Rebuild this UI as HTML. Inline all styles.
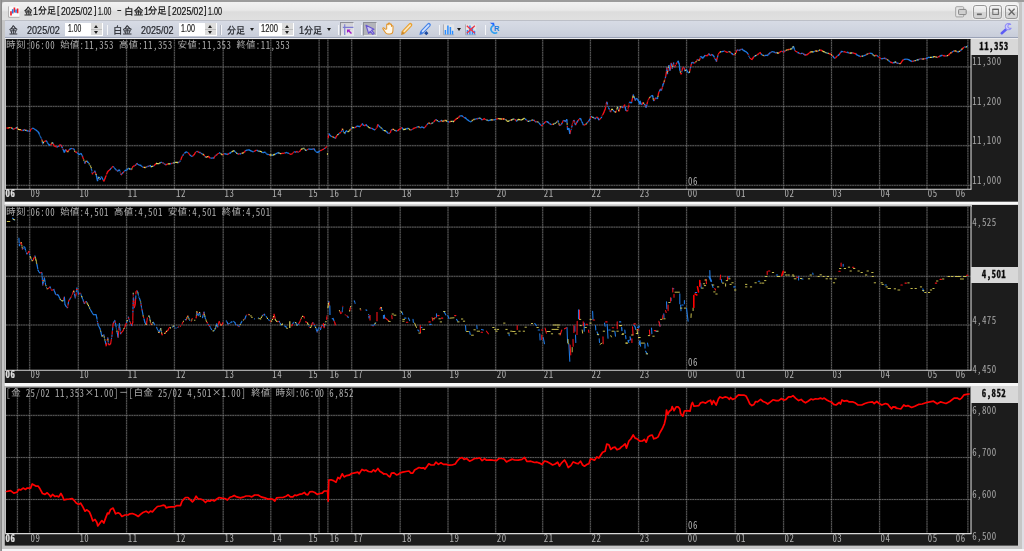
<!DOCTYPE html>
<html lang="ja"><head><meta charset="utf-8"><title>金1分足[2025/02]1.00 - 白金1分足[2025/02]1.00</title>
<style>html,body{margin:0;padding:0}
body{width:1024px;height:551px;overflow:hidden;position:relative;background:#f4f4f6;font-family:"Liberation Sans","IPAGothic","Noto Sans CJK JP",sans-serif;}
.win{position:absolute;left:0;top:0;width:1022px;height:549px;background:#c6c6c6;border-radius:3px 3px 0 0}
.edgeT{position:absolute;left:0;top:0;width:1024px;height:2px;background:#9c9c9c}
.edgeL{position:absolute;left:0;top:0;width:1px;height:551px;background:#9a9a9a;border-right:1px solid #8a8a8a}
.edgeR{position:absolute;left:1022px;top:2px;width:2px;height:549px;background:linear-gradient(90deg,#d0d0d4 0,#d0d0d4 20%,#dedee4 20%)}
.edgeB{position:absolute;left:1.7px;top:548.6px;width:1022.3px;height:2.4px;background:#f6f6f8}
.title{position:absolute;left:2px;top:2.2px;width:1016.6px;height:18.2px;background:linear-gradient(#f2f2f2,#e9e9e9 45%,#dcdcdc 55%,#e0e0e0);border-radius:3px 3px 0 0}
.ttext{position:absolute;left:24px;top:6.6px;font-size:10.1px;line-height:11px;color:#1a1a1a;white-space:nowrap;letter-spacing:-0.3px;text-shadow:0 0 2px #fff}
.tool{position:absolute;left:4.6px;top:20.3px;width:1013.6px;height:17.7px;background:linear-gradient(#d7dbe5,#cfd4df 60%,#c8cdda);border-top:0.6px solid #bcbfc7;box-sizing:border-box;border-bottom:1.2px solid #9aa2b6}
.toolw{position:absolute;left:4.6px;top:38.0px;width:1013.6px;height:1.4px;background:#ececee}
.tl{position:absolute;top:24.6px;font-size:9.9px;line-height:11px;color:#30323a;white-space:nowrap;letter-spacing:-0.35px}
.inp{position:absolute;top:22.5px;height:13.8px;background:#fff;box-sizing:border-box}
.inp span{position:absolute;left:2px;top:1.2px;font-size:9.6px;line-height:11px;color:#222;letter-spacing:-0.6px}
.spin{position:absolute;right:1.1px;top:0.9px;width:11px;height:12px;background:#dcdcdc}
.spin:before,.spin:after{content:"";position:absolute;left:3.2px;border-left:2.4px solid transparent;border-right:2.4px solid transparent}
.spin:before{top:1.6px;border-bottom:3px solid #222}
.spin:after{bottom:1.6px;border-top:3px solid #222}
.spin i{position:absolute;left:0;right:0;top:5.6px;height:0.8px;background:#bdbdbd}
.vsep{position:absolute;top:24.6px;width:1.5px;height:10.4px;background:linear-gradient(90deg,#b4b8c2 0,#b4b8c2 35%,#f4f5f8 45%)}
.dd{position:absolute;top:27.8px;width:0;height:0;border-left:2.5px solid transparent;border-right:2.5px solid transparent;border-top:3px solid #1c1c1c}
.btn{position:absolute;top:22px;height:13.8px;background:#b4b6be;border:0.6px solid #e4e6ea;border-top-color:#8e9098;border-left-color:#8e9098;box-sizing:border-box}
.ico{position:absolute}
.chart{position:absolute;left:0;top:0;width:1024px;height:551px}
.pane{position:absolute;left:4.8px;width:1013.2px;background:#1c1c1c}
.plot{position:absolute;left:6px;width:965px;background:#000}
.sep{position:absolute;left:4.8px;width:1013.2px;height:3.2px;background:linear-gradient(#f4f4f4,#fafafa 40%,#ececec)}
.ptop{position:absolute;left:4.8px;width:967.2px;background:#c6c6c6}
.cv{position:absolute;left:0;top:0}
.t{position:absolute;filter:grayscale(1);transform:scaleY(1.2);transform-origin:0 50%;font-family:"Noto Sans Mono CJK JP","IPAGothic","Liberation Mono",monospace;font-size:8.9px;letter-spacing:0.458px;line-height:11px;color:#c6c6c6;white-space:nowrap}
.xl{color:#b0b0b0}
.yl{left:972.2px;color:#a8a8a8}
.inf{left:6.1px;color:#acacac}
.pb{position:absolute;left:971.2px;width:46.8px;background:#d8d8d8}
.pb span{position:absolute;left:-1.2px;right:0;top:50%;margin-top:-6.5px;text-align:center;font-family:'Noto Sans Mono CJK JP','IPAGothic','Liberation Mono',monospace;font-size:8.9px;letter-spacing:0.458px;line-height:11px;font-weight:bold;color:#0a0a0a;filter:grayscale(1);transform:scaleY(1.2);-webkit-text-stroke:0.25px #0a0a0a}
.wb{position:absolute;top:4.55px;width:13.7px;height:14.1px;box-sizing:border-box;border:1px solid #969696;border-radius:2.8px;background:linear-gradient(#f3f3f3,#e6e6e6 48%,#d6d6d6 52%,#d2d2d2);box-shadow:0 0 0 0.7px rgba(255,255,255,.55)}

.wb svg{position:absolute;left:-0.8px;top:-0.85px}
.r{position:absolute;white-space:nowrap;transform-origin:0 50%;line-height:12px}
.b1{background:linear-gradient(#d2d2d6,#e6e6ea)}
.b2{background:#b3b4ba}
.it{transform-origin:0 50%}
.k{font-family:"IPAGothic","Noto Sans CJK JP",monospace;font-size:9.816px;letter-spacing:0;display:inline-block;transform:scaleY(0.833);transform-origin:0 62%}
.xb{font-weight:bold;color:#e2e2e2;-webkit-text-stroke:0.2px #e2e2e2}
</style></head><body>
<div class="win"></div>
<div class="edgeR"></div><div class="edgeB"></div>
<div class="edgeT"></div><div class="edgeL"></div>
<div class="title"></div>
<svg class="ico" style="left:8px;top:5.6px" width="12" height="12" viewBox="0 0 12 12"><path d="M0.7 0.4V11.2H11.4" fill="none" stroke="#9a9a9a" stroke-width="0.8"/><rect x="1.1" y="0.5" width="10.2" height="10.2" fill="#fbfbfb"/><path d="M3 9.4V5.2M6.4 6.6V1.4M9.6 7.2V2.6" stroke="#f0202c" stroke-width="1.7" fill="none"/><path d="M4.7 7.6V3.2M8 6.8V3.4" stroke="#2a7ae2" stroke-width="1.6" fill="none"/></svg>
<span class="r" style="left:24.12px;top:5.80px;font-family:'Liberation Sans','IPAGothic','Noto Sans CJK JP',sans-serif;font-size:10.0px;transform:scale(0.851,1);color:#101010;-webkit-text-stroke:0.2px currentColor;filter:grayscale(1)">金</span><span class="r" style="left:33.07px;top:5.55px;font-family:'Liberation Sans',sans-serif;font-size:10.4px;transform:scale(0.860,1);color:#101010;-webkit-text-stroke:0.2px currentColor;filter:grayscale(1)">1</span><span class="r" style="left:38.22px;top:5.30px;font-family:'Liberation Sans','IPAGothic','Noto Sans CJK JP',sans-serif;font-size:10.0px;transform:scale(0.896,1);color:#101010;-webkit-text-stroke:0.2px currentColor;filter:grayscale(1)">分足</span><span class="r" style="left:57.29px;top:4.55px;font-family:'Liberation Sans',sans-serif;font-size:10.4px;transform:scale(0.860,1);color:#101010;-webkit-text-stroke:0.2px currentColor;filter:grayscale(1)">[</span><span class="r" style="left:61.37px;top:5.55px;font-family:'Liberation Sans',sans-serif;font-size:10.4px;transform:scale(0.837,1);color:#101010;-webkit-text-stroke:0.2px currentColor;filter:grayscale(1)">2025/02</span><span class="r" style="left:93.51px;top:4.55px;font-family:'Liberation Sans',sans-serif;font-size:10.4px;transform:scale(0.860,1);color:#101010;-webkit-text-stroke:0.2px currentColor;filter:grayscale(1)">]</span><span class="r" style="left:98.22px;top:5.55px;font-family:'Liberation Sans',sans-serif;font-size:10.4px;transform:scale(0.663,1);color:#101010;-webkit-text-stroke:0.2px currentColor;filter:grayscale(1)">1.00</span><span class="r" style="left:116.65px;top:5.05px;font-family:'Liberation Sans',sans-serif;font-size:10.4px;transform:scale(0.700,1);color:#101010;-webkit-text-stroke:0.2px currentColor;filter:grayscale(1)">−</span><span class="r" style="left:123.55px;top:5.80px;font-family:'Liberation Sans','IPAGothic','Noto Sans CJK JP',sans-serif;font-size:10.0px;transform:scale(0.972,1);color:#101010;-webkit-text-stroke:0.2px currentColor;filter:grayscale(1)">白金</span><span class="r" style="left:143.54px;top:5.55px;font-family:'Liberation Sans',sans-serif;font-size:10.4px;transform:scale(0.860,1);color:#101010;-webkit-text-stroke:0.2px currentColor;filter:grayscale(1)">1</span><span class="r" style="left:148.22px;top:5.30px;font-family:'Liberation Sans','IPAGothic','Noto Sans CJK JP',sans-serif;font-size:10.0px;transform:scale(0.928,1);color:#101010;-webkit-text-stroke:0.2px currentColor;filter:grayscale(1)">分足</span><span class="r" style="left:167.64px;top:4.55px;font-family:'Liberation Sans',sans-serif;font-size:10.4px;transform:scale(0.860,1);color:#101010;-webkit-text-stroke:0.2px currentColor;filter:grayscale(1)">[</span><span class="r" style="left:171.62px;top:5.55px;font-family:'Liberation Sans',sans-serif;font-size:10.4px;transform:scale(0.830,1);color:#101010;-webkit-text-stroke:0.2px currentColor;filter:grayscale(1)">2025/02</span><span class="r" style="left:203.91px;top:4.55px;font-family:'Liberation Sans',sans-serif;font-size:10.4px;transform:scale(0.860,1);color:#101010;-webkit-text-stroke:0.2px currentColor;filter:grayscale(1)">]</span><span class="r" style="left:208.22px;top:5.55px;font-family:'Liberation Sans',sans-serif;font-size:10.4px;transform:scale(0.693,1);color:#101010;-webkit-text-stroke:0.2px currentColor;filter:grayscale(1)">1.00</span>
<div class="tool"></div><div class="toolw"></div>
<div class="inp" style="left:65.2px;width:38.2px"><div class="spin"><i></i></div></div>
<div class="vsep" style="left:106.8px"></div>
<div class="inp" style="left:178.6px;width:38.4px"><div class="spin"><i></i></div></div>
<div class="vsep" style="left:220.4px"></div>
<div class="dd" style="left:250.3px"></div>
<div class="inp" style="left:258.8px;width:35.4px"><div class="spin"><i></i></div></div>
<div class="dd" style="left:327.4px"></div>
<div class="vsep" style="left:337.9px"></div>
<div class="btn b1" style="left:340.2px;width:13.7px"></div>
<svg class="ico" style="left:340px;top:21.6px" width="15" height="15" viewBox="0 0 15 15"><path d="M4.75 2.2V13M2.8 5.4H13.4" stroke="#7a7ad2" stroke-width="1.1" fill="none"/><path d="M7 7.4H10.6L9.5 8.5L12 11L11 12L8.5 9.5L7 11Z" fill="#a11cc4"/></svg>
<div class="vsep" style="left:360.9px"></div>
<div class="btn b2" style="left:363.4px;width:13.8px"></div>
<svg class="ico" style="left:363px;top:21.6px" width="15" height="15" viewBox="0 0 15 15"><path d="M3 3.3L11 7.2L8.6 8.3L11.2 11.4L9.8 12.4L7.3 9.3L5.6 11.4Z" fill="#cfc8f4" stroke="#6a58d0" stroke-width="1.15" stroke-linejoin="round"/></svg>
<svg class="ico" style="left:381.6px;top:22.2px" width="12.2" height="13.2" viewBox="0 0 13 14"><path d="M3.4 7.6L2 6.2C1.2 5.6 0.4 6.6 1.2 7.6L3.6 11.2C4.2 12.4 5 12.8 6.4 12.8H8.4C10.2 12.8 11.4 11.8 11.6 9.8L11.8 4.8C11.8 3.8 10.4 3.7 10.2 4.7V3C10.1 1.9 8.6 1.9 8.5 3V2C8.4 0.9 6.8 0.9 6.7 2V3C6.5 1.9 5 2 5 3.1V7.4Z" fill="#fff8ea" stroke="#e0942c" stroke-width="1.1" stroke-linejoin="round"/></svg>
<svg class="ico" style="left:400px;top:22px" width="14" height="14" viewBox="0 0 14 14"><path d="M10.4 2.9L3.7 9.8" stroke="#e9a030" stroke-width="3.9" stroke-linecap="round" fill="none"/><path d="M10.2 3.1L4.2 9.3" stroke="#fbe6bc" stroke-width="1.7" stroke-linecap="round" fill="none"/><path d="M1.1 12.9L1.7 9.3L4.6 12Z" fill="#c9872c"/></svg>
<svg class="ico" style="left:418px;top:22px" width="14" height="14" viewBox="0 0 14 14"><path d="M7.1 9.4L9.2 7.3L11.3 9.4L9.2 11.5Z" transform="translate(-0.9,1.8)" fill="#1e4a9e"/><path d="M10.9 2.9L4.2 9.8" stroke="#4784e6" stroke-width="3.9" stroke-linecap="round" fill="none"/><path d="M10.7 3.1L4.7 9.3" stroke="#d2e2ff" stroke-width="1.7" stroke-linecap="round" fill="none"/><path d="M1.5 12.9L2.1 9.3L5 12Z" fill="#3a76dc"/></svg>
<div class="vsep" style="left:438.6px"></div>
<svg class="ico" style="left:443px;top:23.6px" width="12" height="12" viewBox="0 0 12 12"><rect x="0.4" y="0.4" width="10.8" height="10.3" fill="#e4e4e6"/><path d="M0.5 0.4V10.8H11.2" stroke="#9a9aa0" stroke-width="0.7" fill="none"/><path d="M2.4 10.4V6M4.9 10.4V1.4M7.4 10.4V3M9.6 10.4V6.8" stroke="#2a8cff" stroke-width="1.5" fill="none"/></svg>
<div class="dd" style="left:456.6px;top:28.2px"></div>
<svg class="ico" style="left:465.2px;top:23.6px" width="12" height="12" viewBox="0 0 12 12"><rect x="0.4" y="0.4" width="10.8" height="10.3" fill="#e4e4e6"/><path d="M0.5 0.4V10.8H11.2" stroke="#9a9aa0" stroke-width="0.7" fill="none"/><path d="M2.4 10.4V6M4.9 10.4V1.4M7.4 10.4V3M9.6 10.4V6.8" stroke="#2a8cff" stroke-width="1.5" fill="none"/><path d="M1.8 1.8L9.8 9.2M9.8 1.8L1.8 9.2" stroke="#f03444" stroke-width="1.3" fill="none"/></svg>
<div class="vsep" style="left:484.9px"></div>
<svg class="ico" style="left:487.6px;top:22.4px" width="13" height="14" viewBox="0 0 13 14"><path d="M6.6 3.1A4 4 0 1 0 9.2 10.4" stroke="#34a2f0" stroke-width="1.7" fill="none"/><path d="M1.7 0.8H6.2V3.9L4.4 2.4Z" fill="#2466ff"/><text x="6" y="9.1" font-family="Liberation Sans, sans-serif" font-weight="bold" font-size="7.4" fill="#1a7ae2">R</text></svg>
<svg class="ico" style="left:1000.2px;top:23.4px" width="12.2" height="12.2" viewBox="0 0 13 13"><path d="M1.9 10.9L6.6 6.7" stroke="#5c5cf4" stroke-width="2.7" stroke-linecap="round" fill="none"/><path d="M11.4 1.5A3.4 3.4 0 1 0 11.9 5.6L9.6 5.5L8.3 4.2L8.9 1.6Z" fill="#cfcdfd" stroke="#918ef6" stroke-width="1.1" stroke-linejoin="round"/></svg>
<svg class="ico" style="left:955px;top:5.8px" width="12" height="12" viewBox="0 0 12 12"><rect x="0.7" y="0.7" width="8" height="10.2" rx="1" fill="#e6e6e6" stroke="#9a9a9a" stroke-width="0.9"/><rect x="3.6" y="3.4" width="7.6" height="5.2" rx="0.8" fill="#cfcfcf" stroke="#858585" stroke-width="1"/></svg>
<div class="wb" style="left:972.9px"><svg width="13" height="14" viewBox="0 0 13 14"><path d="M3.9 9.3H8.8" stroke="#666" stroke-width="1.7"/></svg></div>
<div class="wb" style="left:988.8px"><svg width="13" height="14" viewBox="0 0 13 14"><rect x="3.8" y="4.4" width="5.6" height="5" fill="none" stroke="#6a6a6a" stroke-width="1"/><path d="M3.4 4.3H9.8" stroke="#666" stroke-width="1.2"/></svg></div>
<div class="wb" style="left:1004.8px"><svg width="13" height="14" viewBox="0 0 13 14"><path d="M3.6 3.8L9.6 10M9.6 3.8L3.6 10" stroke="#666" stroke-width="1.25"/></svg></div>
<span class="r" style="left:9.35px;top:24.60px;font-family:'Liberation Sans','IPAGothic','Noto Sans CJK JP',sans-serif;font-size:10.3px;transform:scale(0.850,1);color:#24262c;-webkit-text-stroke:0.22px currentColor">金</span><span class="r" style="left:27.15px;top:23.80px;font-family:'Liberation Sans',sans-serif;font-size:11.0px;transform:scale(0.825,1);color:#24262c;-webkit-text-stroke:0.22px currentColor">2025/02</span><span class="r" style="left:112.97px;top:24.60px;font-family:'Liberation Sans','IPAGothic','Noto Sans CJK JP',sans-serif;font-size:10.3px;transform:scale(0.925,1);color:#24262c;-webkit-text-stroke:0.22px currentColor">白金</span><span class="r" style="left:141.15px;top:23.80px;font-family:'Liberation Sans',sans-serif;font-size:11.0px;transform:scale(0.819,1);color:#24262c;-webkit-text-stroke:0.22px currentColor">2025/02</span><span class="r" style="left:227.05px;top:24.60px;font-family:'Liberation Sans','IPAGothic','Noto Sans CJK JP',sans-serif;font-size:10.3px;transform:scale(0.877,1);color:#24262c;-webkit-text-stroke:0.22px currentColor">分足</span><span class="r" style="left:298.75px;top:23.80px;font-family:'Liberation Sans',sans-serif;font-size:11.0px;transform:scale(0.850,1);color:#24262c;-webkit-text-stroke:0.22px currentColor">1</span><span class="r" style="left:304.15px;top:24.60px;font-family:'Liberation Sans','IPAGothic','Noto Sans CJK JP',sans-serif;font-size:10.3px;transform:scale(0.884,1);color:#24262c;-webkit-text-stroke:0.22px currentColor">分足</span><span class="r" style="left:67.65px;top:22.70px;font-family:'Liberation Sans',sans-serif;font-size:10.2px;transform:scale(0.667,1);color:#1c1c1c;filter:grayscale(1);-webkit-text-stroke:0.2px currentColor">1.00</span><span class="r" style="left:180.75px;top:22.70px;font-family:'Liberation Sans',sans-serif;font-size:10.2px;transform:scale(0.699,1);color:#1c1c1c;filter:grayscale(1);-webkit-text-stroke:0.2px currentColor">1.00</span><span class="r" style="left:260.75px;top:22.70px;font-family:'Liberation Sans',sans-serif;font-size:10.2px;transform:scale(0.744,1);color:#1c1c1c;filter:grayscale(1);-webkit-text-stroke:0.2px currentColor">1200</span>

<div class="chart">
<svg class="cv" width="1024" height="551" viewBox="0 0 1024 551"><rect x="4.8" y="39.30" width="1013.2" height="162.50" fill="#1c1c1c"/><rect x="6" y="39.30" width="965" height="149.90" fill="#000"/><rect x="4.8" y="201.80" width="1013.2" height="3.1" fill="#f8f8f8"/><rect x="4.8" y="204.90" width="1013.2" height="178.10" fill="#1c1c1c"/><rect x="4.8" y="204.90" width="967.2" height="1.90" fill="#c6c6c6"/><rect x="6" y="206.50" width="965" height="163.70" fill="#000"/><rect x="4.8" y="383.00" width="1013.2" height="3.1" fill="#f8f8f8"/><rect x="4.8" y="386.10" width="1013.2" height="159.50" fill="#1c1c1c"/><rect x="4.8" y="386.10" width="967.2" height="1.80" fill="#c6c6c6"/><rect x="6" y="387.60" width="965" height="146.00" fill="#000"/></svg>
<svg class="cv grid" width="1024" height="551" viewBox="0 0 1024 551">
<path d="M17.4 39.6V189.2M29.7 39.6V189.2M78.3 39.6V189.2M126.6 39.6V189.2M174.4 39.6V189.2M223.2 39.6V189.2M270.8 39.6V189.2M319.1 39.6V189.2M327.9 39.6V189.2M351.7 39.6V189.2M400.2 39.6V189.2M448.0 39.6V189.2M495.7 39.6V189.2M542.7 39.6V189.2M590.4 39.6V189.2M638.6 39.6V189.2M686.6 39.6V189.2M735.2 39.6V189.2M783.6 39.6V189.2M831.5 39.6V189.2M879.6 39.6V189.2M927.0 39.6V189.2M967.9 39.6V189.2M6.0 66.9H971.0M6.0 106.4H971.0M6.0 145.7H971.0M6.0 185.3H971.0M17.4 206.8V370.2M29.7 206.8V370.2M78.3 206.8V370.2M126.6 206.8V370.2M174.4 206.8V370.2M223.2 206.8V370.2M270.8 206.8V370.2M319.1 206.8V370.2M327.9 206.8V370.2M351.7 206.8V370.2M400.2 206.8V370.2M448.0 206.8V370.2M495.7 206.8V370.2M542.7 206.8V370.2M590.4 206.8V370.2M638.6 206.8V370.2M686.6 206.8V370.2M735.2 206.8V370.2M783.6 206.8V370.2M831.5 206.8V370.2M879.6 206.8V370.2M927.0 206.8V370.2M967.9 206.8V370.2M6.0 227.1H971.0M6.0 276.3H971.0M6.0 325.0H971.0M17.4 387.9V533.6M29.7 387.9V533.6M78.3 387.9V533.6M126.6 387.9V533.6M174.4 387.9V533.6M223.2 387.9V533.6M270.8 387.9V533.6M319.1 387.9V533.6M327.9 387.9V533.6M351.7 387.9V533.6M400.2 387.9V533.6M448.0 387.9V533.6M495.7 387.9V533.6M542.7 387.9V533.6M590.4 387.9V533.6M638.6 387.9V533.6M686.6 387.9V533.6M735.2 387.9V533.6M783.6 387.9V533.6M831.5 387.9V533.6M879.6 387.9V533.6M927.0 387.9V533.6M967.9 387.9V533.6M6.0 415.4H971.0M6.0 457.5H971.0M6.0 499.5H971.0" stroke="#ffffff" stroke-opacity="0.10" stroke-width="1.7" fill="none"/>
<path d="M17.4 39.6V189.2M29.7 39.6V189.2M78.3 39.6V189.2M126.6 39.6V189.2M174.4 39.6V189.2M223.2 39.6V189.2M270.8 39.6V189.2M319.1 39.6V189.2M327.9 39.6V189.2M351.7 39.6V189.2M400.2 39.6V189.2M448.0 39.6V189.2M495.7 39.6V189.2M542.7 39.6V189.2M590.4 39.6V189.2M638.6 39.6V189.2M686.6 39.6V189.2M735.2 39.6V189.2M783.6 39.6V189.2M831.5 39.6V189.2M879.6 39.6V189.2M927.0 39.6V189.2M967.9 39.6V189.2M6.0 66.9H971.0M6.0 106.4H971.0M6.0 145.7H971.0M6.0 185.3H971.0M17.4 206.8V370.2M29.7 206.8V370.2M78.3 206.8V370.2M126.6 206.8V370.2M174.4 206.8V370.2M223.2 206.8V370.2M270.8 206.8V370.2M319.1 206.8V370.2M327.9 206.8V370.2M351.7 206.8V370.2M400.2 206.8V370.2M448.0 206.8V370.2M495.7 206.8V370.2M542.7 206.8V370.2M590.4 206.8V370.2M638.6 206.8V370.2M686.6 206.8V370.2M735.2 206.8V370.2M783.6 206.8V370.2M831.5 206.8V370.2M879.6 206.8V370.2M927.0 206.8V370.2M967.9 206.8V370.2M6.0 227.1H971.0M6.0 276.3H971.0M6.0 325.0H971.0M17.4 387.9V533.6M29.7 387.9V533.6M78.3 387.9V533.6M126.6 387.9V533.6M174.4 387.9V533.6M223.2 387.9V533.6M270.8 387.9V533.6M319.1 387.9V533.6M327.9 387.9V533.6M351.7 387.9V533.6M400.2 387.9V533.6M448.0 387.9V533.6M495.7 387.9V533.6M542.7 387.9V533.6M590.4 387.9V533.6M638.6 387.9V533.6M686.6 387.9V533.6M735.2 387.9V533.6M783.6 387.9V533.6M831.5 387.9V533.6M879.6 387.9V533.6M927.0 387.9V533.6M967.9 387.9V533.6M6.0 415.4H971.0M6.0 457.5H971.0M6.0 499.5H971.0" stroke="#ffffff" stroke-opacity="0.28" stroke-width="1.0" stroke-dasharray="1.7 0.76" fill="none"/>
</svg>
<svg class="cv" width="1024" height="551" viewBox="0 0 1024 551">
<g stroke="#d8d8d8" stroke-width="1.1" fill="none">
<path d="M5.0 189.2H971.4"/>
<path d="M971.0 39.3V189.6"/>
<path d="M5.4 39.3V189.6" stroke="#c2c2c2" stroke-width="1.2"/>
<path d="M5.0 370.2H971.4"/>
<path d="M971.0 206.5V370.6"/>
<path d="M5.4 206.5V370.6" stroke="#c2c2c2" stroke-width="1.2"/>
<path d="M5.0 533.6H971.4"/>
<path d="M971.0 387.6V534.0"/>
<path d="M5.4 387.6V534.0" stroke="#c2c2c2" stroke-width="1.2"/>
</g>
<path d="M6.5 491.5 L10.6 490.6 L13.8 493.1 L16.9 492.2 L18.8 489.4 L20.6 490.0 L23.1 488.1 L25.6 489.4 L26.9 488.1 L30.6 488.1 L32.2 484.0 L34.4 485.2 L36.2 486.2 L38.1 486.0 L40.0 488.8 L42.5 493.5 L45.0 494.4 L47.2 492.8 L49.4 495.0 L50.6 496.9 L52.5 494.4 L55.0 496.5 L56.9 496.0 L58.8 496.9 L60.9 493.5 L62.5 496.2 L64.0 500.0 L66.2 499.4 L69.4 499.0 L71.9 498.5 L73.8 500.0 L76.2 503.1 L78.8 504.4 L80.6 503.1 L82.5 506.2 L85.0 511.2 L86.9 509.8 L89.4 511.9 L91.2 516.2 L92.8 521.0 L95.0 519.4 L96.9 522.5 L97.8 526.0 L100.0 523.1 L101.9 520.6 L103.8 523.1 L105.6 518.1 L107.5 513.1 L108.8 513.8 L110.6 509.4 L113.1 508.1 L115.6 513.8 L118.1 512.8 L120.0 513.8 L121.9 516.5 L125.0 515.0 L127.8 515.0 L128.0 515.0 L129.9 513.8 L132.4 513.5 L135.5 514.8 L138.2 516.5 L140.5 514.4 L143.0 512.5 L146.1 511.2 L148.6 512.8 L150.5 511.0 L152.4 511.9 L154.9 509.0 L157.4 506.5 L160.5 506.0 L163.0 505.2 L164.9 505.6 L166.1 507.8 L168.6 507.2 L171.1 506.9 L174.2 506.9 L176.8 505.6 L180.5 505.6 L182.0 501.2 L183.6 499.4 L185.5 497.5 L188.0 497.5 L189.9 499.4 L192.4 501.9 L194.2 500.0 L196.1 496.2 L198.0 498.8 L200.5 499.0 L203.0 500.0 L205.5 502.5 L207.4 500.6 L209.9 501.2 L211.8 500.0 L214.2 501.0 L216.8 499.0 L219.2 497.5 L221.8 498.1 L224.9 498.5 L227.4 500.0 L229.9 497.2 L232.4 496.5 L234.2 495.4 L236.8 496.9 L240.5 497.8 L243.0 497.2 L246.1 496.0 L249.2 496.0 L251.8 496.9 L254.2 495.2 L255.8 495.0 L256.0 495.0 L258.5 495.2 L261.0 496.9 L264.8 497.8 L267.9 499.1 L271.0 498.8 L272.9 499.4 L274.8 501.2 L276.6 497.8 L279.8 497.5 L282.9 497.5 L286.0 496.2 L288.2 494.8 L290.4 496.9 L292.9 496.9 L294.8 495.0 L296.6 495.6 L299.1 494.4 L302.2 493.8 L304.5 492.5 L306.0 494.4 L307.9 494.8 L309.8 491.9 L312.2 491.5 L314.8 492.5 L317.2 494.4 L319.8 493.5 L322.2 493.1 L324.1 491.2 L326.0 491.0 L327.5 491.0 L328.2 501.2 L328.8 480.0 L331.0 479.8 L333.5 480.6 L336.0 482.2 L337.9 477.5 L339.8 478.8 L342.2 473.8 L344.1 476.9 L346.6 475.6 L349.1 475.2 L351.6 473.5 L354.8 472.8 L357.9 472.2 L359.1 473.8 L362.0 469.4 L364.1 470.6 L366.0 470.0 L368.5 471.5 L371.6 471.9 L373.5 469.8 L375.4 471.5 L377.9 468.5 L379.8 471.2 L382.2 472.8 L383.8 474.0 L384.0 473.8 L386.5 474.0 L388.4 476.0 L390.0 476.9 L391.5 473.1 L394.0 472.8 L396.5 474.8 L398.4 474.4 L400.2 472.8 L402.8 472.2 L405.9 471.5 L409.0 471.0 L410.9 473.1 L412.8 473.1 L414.6 470.0 L416.8 468.8 L419.0 467.5 L421.5 468.1 L423.4 467.8 L425.0 469.0 L427.1 466.2 L428.8 463.8 L430.9 465.0 L434.0 465.0 L435.9 462.2 L438.4 464.4 L440.9 462.8 L443.4 464.4 L446.5 464.4 L449.0 465.2 L452.1 465.0 L455.2 464.0 L457.1 461.2 L459.6 458.5 L462.1 457.5 L464.0 459.4 L466.5 458.5 L469.6 461.2 L472.1 460.0 L474.6 458.5 L477.1 458.5 L479.6 457.8 L482.1 460.6 L484.6 458.8 L486.5 460.2 L490.2 459.8 L492.8 460.2 L496.5 460.6 L499.0 458.5 L501.5 458.5 L504.0 459.0 L506.5 461.9 L509.0 460.6 L511.8 459.4 L512.0 459.0 L514.5 460.0 L518.2 460.2 L522.0 459.4 L524.5 457.5 L527.0 461.5 L530.8 461.2 L534.5 462.5 L537.0 462.2 L539.5 463.1 L542.0 464.4 L544.5 461.0 L547.6 461.9 L550.8 463.8 L552.6 465.0 L555.1 464.0 L557.6 462.2 L559.5 466.0 L561.4 463.1 L564.5 460.0 L566.4 463.1 L568.2 467.5 L570.8 465.6 L573.2 461.9 L575.8 463.1 L578.2 463.8 L580.5 461.2 L582.6 465.0 L584.5 466.2 L587.0 464.4 L588.9 463.8 L590.5 458.8 L592.6 459.4 L594.5 460.2 L596.8 456.9 L598.9 458.1 L600.8 455.0 L602.6 452.2 L605.1 451.2 L606.8 444.0 L608.9 444.8 L610.8 449.4 L613.2 447.5 L615.1 447.2 L617.0 449.8 L619.5 448.8 L621.4 446.9 L623.2 445.6 L625.1 443.8 L626.4 448.1 L628.9 441.0 L630.8 439.0 L633.2 435.0 L635.1 438.1 L637.0 438.8 L639.8 441.2 L640.0 441.2 L642.5 441.0 L644.4 439.4 L646.2 442.2 L648.1 436.9 L650.0 435.6 L652.2 435.0 L653.8 438.8 L656.2 438.1 L658.1 436.9 L660.0 432.5 L662.2 428.8 L664.4 423.8 L665.6 418.8 L666.5 410.0 L667.8 414.4 L669.4 411.2 L671.2 410.0 L672.2 406.5 L674.0 410.6 L676.2 406.9 L678.1 406.9 L679.8 408.8 L680.6 413.5 L682.8 416.2 L684.4 411.0 L686.9 410.6 L690.0 411.2 L691.5 404.4 L692.5 402.5 L694.0 406.2 L696.2 406.0 L698.8 405.6 L700.6 402.8 L703.1 402.2 L705.6 403.1 L708.1 401.2 L710.6 400.2 L711.9 404.4 L713.5 400.6 L716.2 405.0 L718.5 398.8 L720.0 396.9 L722.5 398.1 L725.0 396.9 L727.5 397.5 L729.4 399.4 L730.6 397.5 L732.5 399.4 L735.0 398.5 L736.9 396.2 L738.8 394.8 L741.2 395.2 L743.8 395.0 L746.0 396.0 L747.8 399.4 L749.8 403.8 L751.9 405.6 L754.0 404.4 L755.6 401.5 L757.5 401.9 L760.6 399.4 L763.1 401.5 L765.6 402.5 L767.8 404.0 L768.0 403.8 L770.5 401.9 L773.0 399.8 L776.1 400.6 L778.6 400.6 L781.5 398.5 L783.6 400.2 L786.1 399.4 L788.6 396.9 L791.1 396.9 L793.0 395.6 L795.5 398.1 L798.6 400.6 L801.1 399.4 L803.0 401.2 L805.5 402.8 L808.0 401.2 L811.1 399.0 L813.0 399.8 L815.5 398.8 L818.0 399.0 L820.5 398.1 L822.4 399.0 L824.2 398.1 L826.8 400.0 L829.2 401.2 L831.8 402.2 L833.6 404.4 L836.1 405.0 L839.2 402.5 L840.5 404.0 L842.0 400.0 L844.2 401.2 L846.8 400.6 L849.2 401.9 L853.0 401.9 L855.5 403.1 L858.0 405.0 L861.8 405.0 L864.9 403.5 L868.0 402.5 L872.4 401.9 L874.2 403.5 L876.8 401.5 L879.2 403.5 L881.8 405.0 L885.5 403.5 L888.0 404.4 L889.9 406.9 L891.5 408.8 L893.0 406.9 L895.8 407.2 L896.0 408.1 L898.5 408.5 L901.0 408.8 L903.8 405.0 L905.8 406.2 L907.9 405.6 L911.6 407.5 L914.8 406.2 L918.5 404.4 L922.2 404.0 L926.6 402.5 L929.8 401.9 L933.5 401.2 L937.2 403.8 L940.4 401.9 L943.5 402.8 L946.0 403.5 L949.8 401.5 L954.1 398.1 L957.2 398.1 L959.8 399.4 L961.6 398.1 L964.1 394.8 L966.6 394.4 L969.1 394.0" stroke="#ff0000" stroke-width="1.7" fill="none" stroke-linejoin="round" stroke-linecap="round"/>
<path d="M6.5 128.1L7.2 128.0M7.2 128.0L8.0 127.9M8.0 128.5L8.8 127.5M9.6 127.7L10.4 127.6M10.4 127.6L11.2 127.5M13.1 129.4L14.1 128.9M14.1 128.9L15.0 128.5M15.0 128.5L15.9 127.9M17.5 128.0L18.1 129.5M20.6 130.3L21.6 129.9M21.6 130.5L22.5 130.5M24.4 129.2L25.3 130.5M28.1 131.0L28.9 131.2M29.8 131.8L30.5 130.1M30.5 129.9L31.2 129.2M31.2 129.0L32.2 128.6M41.9 139.4L42.1 140.6M42.8 143.8L43.2 143.4M43.8 141.3L44.6 141.8M44.6 141.2L45.4 141.2M45.4 141.6L46.2 140.3M50.0 145.3L50.8 144.7M50.8 144.9L51.7 143.4M53.1 143.4L53.8 145.2M53.8 145.0L54.4 146.2M54.4 146.2L55.2 146.5M55.2 146.5L56.0 146.7M56.0 147.3L56.9 146.6M58.8 146.8L59.7 145.0M59.7 145.3L60.6 144.4M61.2 145.0L61.9 147.2M62.5 148.7L63.1 149.3M65.6 149.4L66.6 150.8M66.6 150.8L67.5 152.2M68.4 150.8L69.4 149.4M72.1 148.9L72.9 148.5M75.0 151.9L75.9 152.2M75.9 151.6L76.9 152.8M82.5 156.0L83.1 158.4M83.1 158.4L83.6 159.3M85.0 163.5L85.6 162.1M86.2 161.2L87.1 161.2M92.2 172.9L92.5 174.4M92.5 173.8L93.2 173.6M93.2 172.7L94.0 172.4M94.0 171.5L94.8 171.3M95.2 172.0L95.8 173.8M97.9 179.3L98.3 178.4M103.2 180.0L103.8 181.2M103.8 181.6L104.4 179.6M104.4 180.4L105.0 178.0M105.0 178.9L105.6 176.6M105.6 176.9L106.1 175.6M106.1 175.0L106.6 174.7M106.6 174.1L107.0 173.3M107.0 173.7L107.5 171.6M107.5 172.5L108.3 170.7M108.3 171.0L109.2 170.2M109.2 170.2L110.0 169.4M110.8 168.6L111.6 167.8M111.6 167.5L112.3 167.2M112.3 167.0L113.1 166.2M116.6 170.2L117.5 171.0M120.3 172.8L120.8 173.2M121.2 175.3L122.2 173.3M123.1 172.8L124.1 171.4M130.7 169.7L131.5 169.6M132.2 168.0L133.0 166.2M133.0 165.9L133.9 166.3M133.9 165.5L134.9 166.3M135.8 165.3L136.8 163.2M143.0 167.2L143.8 167.3M145.5 167.5L146.3 167.1M147.2 166.4L148.0 166.4M149.5 166.4L150.2 165.3M153.6 166.0L154.5 165.2M154.5 165.2L155.3 164.3M155.3 164.6L156.1 163.3M162.0 162.8L162.8 162.7M163.6 163.4L164.6 163.8M165.5 165.3L166.3 164.2M166.3 164.8L167.2 164.1M167.2 164.2L168.0 164.0M170.8 163.6L171.8 163.5M171.8 163.5L172.6 163.2M178.6 162.4L179.6 161.8M180.5 160.0L181.0 159.6M181.0 159.6L181.5 157.7M181.5 157.9L182.0 156.5M182.0 156.2L182.8 155.7M183.5 153.9L184.2 153.8M187.8 152.8L188.6 152.6M188.6 153.1L189.2 153.8M189.2 154.0L189.9 155.2M192.4 156.5L193.3 155.4M193.3 155.4L194.2 154.4M194.2 155.0L195.0 152.9M195.0 153.2L195.8 152.1M195.8 151.5L196.5 151.3M197.6 151.0L198.6 152.6M198.6 151.9L199.5 152.7M200.3 153.1L201.1 153.0M203.6 154.4L204.7 156.2M206.5 157.6L207.2 156.4M208.0 155.9L208.8 157.3M208.8 156.4L209.7 157.9M209.7 157.6L210.5 158.1M213.6 158.7L214.6 156.6M214.6 156.6L215.5 155.8M216.3 155.6L217.2 154.1M217.2 153.8L218.0 154.1M218.0 153.8L218.9 153.2M222.4 155.0L223.3 154.4M223.3 154.1L224.2 153.9M227.4 155.0L228.3 153.6M228.3 154.2L229.2 153.3M238.0 154.6L238.8 153.6M238.8 153.9L239.7 153.8M241.3 153.2L242.1 153.4M243.6 152.8L244.6 151.7M244.6 152.3L245.5 150.3M253.6 151.6L254.7 151.2M254.7 151.4L255.8 150.1M255.8 150.6L256.0 150.1M256.0 150.2L256.8 150.5M268.9 155.2L269.8 154.4M281.0 153.4L281.8 153.7M281.8 153.0L282.6 153.7M282.6 153.4L283.3 153.3M283.3 153.0L284.1 153.3M284.1 153.1L285.0 152.9M289.1 153.8L290.0 153.6M290.0 154.4L290.8 153.8M290.8 154.1L291.6 154.4M291.6 154.1L292.5 153.7M292.5 152.9L293.3 153.0M293.3 152.4L294.1 152.0M295.8 151.3L296.6 152.2M296.6 151.3L297.5 152.3M298.3 152.1L299.1 152.2M299.1 151.7L300.1 151.1M300.1 151.1L301.0 149.2M306.8 149.5L307.7 149.8M307.7 148.9L308.5 149.3M312.8 149.3L313.8 148.6M319.8 150.7L320.6 150.7M320.6 150.9L321.4 150.0M321.4 150.2L322.2 149.8M322.2 149.8L323.1 149.3M323.1 149.3L323.9 148.9M324.8 148.5L325.5 147.8M325.5 147.2L326.2 147.5M326.2 147.2L327.0 146.5M328.2 138.1L328.4 136.3M328.4 136.5L328.6 135.2M328.6 134.7L328.8 134.3M331.9 136.3L332.9 137.0M335.4 138.7L336.3 136.3M336.3 136.6L337.2 135.0M339.1 133.2L340.1 133.0M340.1 132.9L341.0 132.2M341.5 131.0L342.0 129.8M342.0 129.4L342.5 128.7M350.4 129.1L351.3 128.6M354.8 127.5L355.6 127.3M355.6 127.8L356.4 126.3M359.8 126.9L360.6 125.9M360.6 125.6L361.4 125.1M361.4 125.0L362.2 124.0M364.1 125.9L365.1 125.0M365.1 125.8L366.0 124.5M370.6 128.2L371.4 128.4M371.4 128.1L372.2 128.7M374.8 129.7L375.7 129.2M375.7 128.5L376.6 128.4M376.6 127.5L377.0 127.2M377.0 127.5L377.5 125.3M377.5 125.9L377.9 124.2M387.8 133.1L388.7 133.3M389.6 132.9L390.4 132.2M390.4 132.5L391.2 129.9M392.1 129.9L393.0 128.8M393.8 129.8L394.5 129.9M397.1 131.0L398.0 130.3M398.0 130.9L398.8 129.4M398.8 129.7L399.6 129.0M399.6 129.0L400.5 128.5M400.5 128.5L401.3 128.0M401.3 128.0L402.1 127.5M410.2 129.7L411.2 130.3M412.1 129.2L413.1 129.2M413.1 129.2L414.0 128.0M414.0 128.4L414.8 127.8M414.8 127.9L415.7 127.7M415.7 128.0L416.5 127.3M419.3 127.1L420.2 127.8M424.2 128.1L425.0 127.2M425.0 127.2L425.8 126.2M425.8 125.9L426.5 125.4M426.5 125.0L427.2 124.6M428.0 123.6L428.8 122.8M429.8 123.7L430.9 123.8M433.4 122.2L434.2 121.6M434.2 121.5L435.0 120.4M435.0 120.4L435.9 119.4M439.6 121.9L440.9 120.6M442.8 121.8L443.6 120.6M444.4 120.6L445.2 120.2M449.0 122.2L449.8 121.9M449.8 121.9L450.7 121.6M454.0 121.5L454.9 120.2M454.9 120.2L455.9 119.0M455.9 119.6L456.8 118.3M457.8 118.1L458.7 117.1M458.7 117.7L459.6 115.7M463.2 117.0L464.0 117.1M472.8 119.7L473.6 119.8M476.9 119.3L477.8 118.2M482.1 120.0L483.1 119.4M483.1 119.4L484.0 118.8M484.0 118.2L484.9 119.5M484.9 119.2L485.9 119.8M492.5 119.6L493.4 120.2M495.9 119.1L496.7 119.2M496.7 119.4L497.5 118.6M497.5 118.5L498.4 118.7M501.7 119.6L502.4 118.7M502.4 118.4L503.2 119.3M504.0 118.7L504.9 119.5M510.2 119.7L511.0 120.4M514.5 119.3L515.4 119.8M515.4 119.7L516.4 121.2M526.4 120.6L527.3 120.5M530.8 120.6L531.6 120.3M534.1 119.9L534.9 121.5M535.8 121.3L536.6 122.2M541.1 125.2L542.0 126.0M542.0 125.4L542.9 124.9M543.9 123.7L544.7 122.2M544.7 121.9L545.5 122.2M545.5 122.5L546.4 121.0M548.9 123.7L549.7 123.4M551.4 124.2L552.2 124.8M552.2 124.5L553.0 124.2M557.2 121.1L558.0 120.9M559.1 124.4L559.5 125.6M560.4 125.0L561.4 124.4M562.1 123.3L562.8 121.5M562.8 121.3L563.5 120.4M565.5 122.1L566.1 120.1M567.3 126.0L567.4 127.3M569.8 134.1L570.3 131.6M570.3 131.9L570.8 130.3M571.4 128.2L571.7 127.6M572.0 125.9L572.3 124.5M572.3 123.9L572.6 123.4M572.6 122.5L573.2 121.9M573.2 121.3L573.9 120.2M574.3 121.2L574.7 122.5M575.5 125.3L576.2 123.3M576.2 123.7L577.0 121.7M577.8 121.2L578.6 119.8M578.6 120.0L579.3 119.1M583.5 125.2L584.2 125.0M584.2 125.3L585.0 124.5M585.0 124.7L585.8 124.4M587.6 122.2L588.6 121.1M590.0 118.8L590.5 117.5M590.5 117.5L591.0 116.2M594.2 118.7L595.1 118.5M596.1 117.5L597.0 117.0M597.0 116.9L597.9 118.4M598.9 120.0L599.9 119.1M599.9 118.8L601.0 118.3M601.8 116.1L602.5 115.5M602.5 114.9L603.2 113.9M603.2 114.3L603.9 112.0M603.9 112.9L604.5 110.5M604.5 111.1L605.1 109.2M605.1 110.0L605.5 107.6M605.5 107.6L605.8 106.5M605.8 105.8L606.1 105.2M606.1 104.6L606.4 103.5M606.4 103.7L606.8 101.7M607.5 105.0L607.9 105.3M609.4 109.7L609.9 110.5M610.5 112.2L611.2 110.2M615.8 112.5L616.2 110.8M616.2 110.3L616.7 109.9M618.9 111.5L619.3 109.8M619.3 109.7L619.8 108.9M619.8 108.8L620.3 107.5M620.8 106.8L621.7 106.7M622.6 107.8L623.6 106.4M623.6 105.8L624.5 105.3M624.5 104.4L624.9 106.7M626.0 110.0L626.8 111.2M626.8 110.6L627.6 111.4M627.6 111.0L627.9 110.1M627.9 109.3L628.2 108.9M628.2 108.3L628.4 107.4M628.4 107.2L628.7 105.9M628.7 105.6L629.0 104.7M629.0 104.0L629.2 103.5M631.7 101.8L632.0 100.4M632.0 100.4L632.3 99.1M632.3 99.1L632.6 97.7M632.9 96.1L633.2 95.2M634.7 98.2L635.1 100.3M641.5 105.0L642.3 103.5M642.3 104.2L643.1 102.2M645.0 104.4L645.6 106.5M646.2 107.5L646.6 106.1M646.9 104.4L647.2 103.4M647.2 103.6L647.5 101.7M647.5 101.3L648.1 100.8M648.1 100.2L648.8 99.3M648.8 99.1L649.4 97.8M653.8 101.0L654.7 99.7M654.7 99.5L655.6 97.8M658.1 95.9L658.4 93.9M658.4 94.1L658.8 92.5M658.8 92.5L659.4 91.2M660.0 90.0L660.6 88.8M661.5 90.3L661.9 89.2M661.9 89.1L662.3 87.5M662.3 87.2L662.7 86.1M663.6 83.7L664.1 81.6M664.5 80.6L665.0 79.4M665.0 78.8L665.3 78.3M665.6 76.9L665.9 75.0M665.9 75.2L666.2 73.8M666.2 74.3L666.4 72.1M666.4 72.1L666.5 71.2M666.6 69.6L666.8 68.2M666.8 67.7L666.9 67.2M667.5 73.4L667.7 72.8M667.7 71.9L667.9 71.3M667.9 71.6L668.1 69.2M668.1 68.9L668.3 68.3M668.5 66.2L668.8 65.2M670.0 70.3L670.2 69.3M670.2 69.7L670.5 67.3M670.5 67.6L670.8 66.1M670.8 66.4L671.0 64.5M671.0 65.2L671.2 62.8M672.0 67.6L672.2 68.6M672.9 65.9L673.2 63.9M673.2 63.5L673.5 62.8M674.1 65.6L674.4 66.0M674.8 67.5L675.2 66.2M675.2 66.0L675.8 65.2M675.8 64.4L676.2 64.0M676.2 64.3L677.2 62.2M680.6 72.8L681.2 74.4M681.2 74.4L681.6 72.8M681.9 71.5L682.2 69.5M682.2 69.7L682.5 68.1M682.5 67.8L683.8 67.0M684.2 68.0L684.6 69.9M689.7 71.3L690.0 69.8M690.0 69.8L690.3 68.3M690.6 66.9L691.0 65.3M691.0 65.3L691.5 63.8M691.9 62.0L692.8 62.8M693.8 62.8L694.7 63.0M694.7 62.8L695.6 62.5M696.6 60.9L697.5 59.4M699.4 60.3L699.8 59.3M699.8 59.5L700.2 57.6M705.0 55.9L705.9 55.3M705.9 55.3L706.9 56.1M706.9 56.3L707.8 54.7M707.8 55.5L708.8 53.5M710.6 55.9L711.9 54.2M714.4 57.8L715.0 58.6M716.5 61.9L716.8 59.6M716.8 60.5L717.1 58.2M717.1 58.5L717.5 57.1M717.8 55.8L718.1 54.4M718.1 53.8L719.1 53.4M719.1 53.1L720.0 51.9M724.2 51.2L725.0 51.0M725.0 51.6L725.9 51.5M725.9 51.5L726.9 52.6M726.9 52.5L727.7 52.2M727.7 51.9L728.5 52.0M730.3 52.3L731.2 53.1M733.1 55.0L734.1 54.4M734.1 54.6L735.0 54.4M735.8 53.1L736.5 51.1M736.5 51.3L737.2 49.8M738.3 50.3L739.4 50.1M740.4 49.6L741.5 49.0M748.1 54.3L748.7 55.2M749.8 58.1L750.8 58.8M750.8 59.4L751.9 59.1M751.9 60.0L752.7 58.0M752.7 58.6L753.5 57.1M753.5 57.0L754.4 56.4M756.9 55.0L757.7 54.4M757.7 55.0L758.4 53.6M758.4 53.3L759.2 53.6M759.2 53.3L760.0 52.8M760.0 52.1L760.9 54.0M763.5 55.6L764.4 56.0M768.0 54.7L768.8 53.6M770.5 51.9L771.3 52.5M775.5 53.4L776.3 52.5M778.6 53.1L779.5 52.5M779.5 52.2L780.3 52.0M780.3 51.9L781.1 51.2M781.1 51.2L782.0 51.5M782.8 51.7L783.6 51.9M783.6 52.5L784.4 51.1M785.2 50.9L786.0 50.5M786.8 49.7L787.5 50.0M788.3 49.1L789.1 49.8M789.1 49.8L789.9 49.2M794.9 50.6L795.7 51.2M795.7 51.2L796.5 51.7M796.5 51.4L797.4 52.4M799.0 53.0L799.9 53.9M799.9 54.0L800.7 53.4M802.4 53.1L803.2 53.8M804.0 53.9L804.9 55.5M805.7 55.6L806.5 54.4M806.5 54.7L807.4 54.4M807.4 55.0L808.2 53.5M808.2 54.0L808.9 53.0M808.9 52.8L809.7 52.6M809.7 53.1L810.5 51.6M814.7 51.0L815.5 51.1M817.2 50.6L818.0 51.5M819.9 49.8L820.7 50.2M820.7 49.6L821.5 50.9M821.5 50.0L822.4 51.3M828.6 53.8L829.5 53.6M829.5 53.2L830.3 54.4M830.3 54.7L831.1 54.1M832.1 55.4L833.0 56.5M834.9 58.2L835.7 57.8M835.7 57.7L836.5 56.8M836.5 56.8L837.4 56.0M839.2 55.0L840.0 53.0M840.0 53.3L840.8 52.3M843.3 51.7L844.2 51.9M844.2 51.3L845.1 52.3M845.1 52.3L845.9 52.0M845.9 52.7L846.8 52.0M849.1 52.9L849.9 53.1M852.2 53.1L853.0 52.6M853.0 52.8L853.8 53.1M853.8 53.1L854.7 53.4M854.7 53.4L855.5 53.8M855.5 53.1L856.3 54.7M859.7 56.8L860.5 56.2M860.5 56.5L861.3 56.4M866.0 54.8L866.8 54.4M868.3 53.8L869.1 53.4M869.1 53.4L869.9 53.1M875.2 55.8L876.1 54.9M876.1 55.3L877.0 55.5M878.6 56.9L879.5 57.5M879.5 57.5L880.3 58.1M880.3 58.4L881.1 58.6M883.0 58.7L883.9 58.1M884.9 58.1L885.7 58.6M886.4 59.1L887.2 59.5M890.3 61.5L891.1 63.0M891.1 62.1L892.1 63.0M892.1 63.4L893.0 62.5M896.0 62.8L896.8 63.0M898.5 63.2L899.4 63.8M900.4 63.8L901.2 62.5M901.2 62.8L902.0 61.1M902.0 61.5L902.9 59.9M902.9 60.3L903.7 59.5M911.6 60.9L912.5 61.6M912.5 61.9L913.3 60.9M914.1 60.4L914.9 61.0M918.8 59.4L919.6 59.1M920.4 58.8L921.2 58.8M921.9 59.5L922.7 58.6M924.3 59.1L925.2 58.5M925.2 58.4L926.0 58.6M934.8 56.5L935.6 56.8M937.2 57.8L938.1 56.9M938.1 56.7L938.9 56.6M938.9 57.1L939.8 55.7M942.2 55.0L943.0 55.6M943.0 55.8L943.8 55.6M943.8 55.1L944.6 56.3M944.6 56.0L945.4 56.2M946.2 56.0L947.0 55.8M947.9 55.3L948.7 54.9M948.7 55.4L949.5 53.7M949.5 54.0L950.4 53.1M951.2 53.2L952.0 51.7M953.8 51.4L954.8 50.5M956.4 51.5L957.2 51.9M959.8 51.5L960.6 50.3M962.2 49.4L963.0 47.8M963.0 48.4L963.8 47.4M963.8 46.9L964.5 47.2" stroke="#f01018" stroke-width="1.3" fill="none" stroke-linecap="butt" />
<path d="M12.2 128.1L13.1 129.5M15.9 128.5L16.9 127.0M22.5 130.0L23.4 130.5M23.4 130.8L24.4 129.4M26.2 130.0L27.2 131.1M27.2 130.8L28.1 131.0M28.9 130.7L29.8 131.8M32.2 128.6L33.1 128.1M33.1 128.4L34.0 128.5M34.0 129.0L34.8 129.1M34.8 129.5L35.6 129.6M35.6 129.8L36.5 130.5M36.5 130.2L37.3 131.3M37.3 131.5L38.1 131.7M38.1 131.6L38.8 133.3M38.8 132.5L39.4 134.7M39.4 135.0L40.0 135.3M40.0 135.9L40.6 136.7M40.6 137.2L41.2 138.0M41.2 138.7L41.9 139.1M42.3 141.9L42.5 143.1M42.5 143.4L42.8 144.2M46.2 140.6L47.2 142.2M47.2 142.5L48.1 143.6M48.1 143.8L49.1 144.7M49.1 144.4L50.0 145.8M52.5 142.2L53.1 143.9M56.9 147.2L57.8 146.4M57.8 146.3L58.8 146.4M60.6 145.0L61.2 145.3M61.9 146.6L62.5 148.3M63.1 149.3L63.8 151.2M63.8 150.7L64.4 152.7M64.4 152.5L65.0 150.9M65.0 150.9L65.6 149.4M69.4 149.7L70.3 148.8M70.3 148.9L71.2 148.5M71.2 148.2L72.1 148.7M72.9 149.0L73.8 148.6M73.8 148.8L74.4 150.3M76.9 152.8L77.8 153.3M77.8 152.8L78.8 154.7M78.8 154.4L79.6 154.1M79.6 154.7L80.4 153.5M80.4 153.2L81.2 153.8M81.2 153.5L81.9 155.0M81.9 155.3L82.5 156.4M84.1 161.4L84.5 161.9M84.5 162.2L85.0 163.5M87.1 160.9L87.9 162.6M87.9 162.3L88.8 163.1M89.5 165.0L90.2 165.3M91.3 168.4L91.6 169.9M91.6 170.2L91.9 171.2M91.9 172.0L92.2 172.6M94.8 170.7L95.2 172.5M96.2 174.4L96.6 176.8M96.6 176.2L96.9 178.2M96.9 178.0L97.2 179.5M97.2 179.5L97.5 181.0M97.5 181.0L97.9 179.6M98.3 178.8L98.8 176.6M99.4 178.9L100.0 179.4M100.0 179.8L100.8 178.0M100.8 177.4L101.5 176.6M101.5 176.8L102.1 177.2M102.1 177.5L102.6 178.8M102.6 178.8L103.2 180.0M110.0 170.0L110.8 168.3M113.1 166.6L114.0 167.1M114.0 167.9L114.8 168.0M114.8 168.3L115.6 169.4M115.6 169.4L116.6 170.2M117.5 171.6L118.4 170.1M118.4 170.4L119.4 169.8M119.4 169.8L119.8 171.0M119.8 171.6L120.3 171.9M120.8 173.8L121.2 174.6M122.2 173.6L123.1 172.5M124.1 171.3L125.0 170.8M125.0 170.6L125.9 170.2M125.9 170.5L126.8 169.6M126.8 169.8L127.8 169.4M127.8 169.4L128.0 168.1M128.0 168.4L128.9 168.4M129.9 168.4L130.7 169.7M134.9 165.4L135.8 165.1M136.8 163.2L137.7 164.3M137.7 164.4L138.6 164.6M138.6 165.1L139.6 164.8M139.6 165.6L140.5 164.9M140.5 164.7L141.3 166.2M141.3 166.2L142.2 166.4M142.2 166.9L143.0 167.1M146.3 167.4L147.2 166.5M148.0 166.6L148.8 165.9M148.8 166.0L149.5 165.8M150.2 165.0L151.1 167.2M152.8 166.3L153.6 166.0M158.6 164.1L159.5 163.1M160.3 162.8L161.1 162.2M161.1 162.2L162.0 162.5M162.8 162.8L163.6 163.1M164.6 163.9L165.5 164.8M169.9 164.3L170.8 163.3M172.6 162.7L173.4 163.3M174.2 162.4L175.2 162.7M177.8 162.0L178.6 163.1M179.6 161.7L180.5 160.6M182.8 155.8L183.5 154.3M184.2 153.2L185.2 152.8M185.2 153.0L186.1 151.7M186.1 152.2L187.0 152.0M187.0 152.5L187.8 152.3M189.9 154.9L190.7 155.8M190.7 156.0L191.5 155.9M191.5 156.1L192.4 156.5M196.5 151.6L197.6 151.3M199.5 151.9L200.3 153.1M201.1 153.7L202.0 153.4M202.0 153.7L202.8 154.2M204.7 156.6L205.8 156.9M210.5 158.1L211.3 158.1M211.3 158.1L212.1 158.1M212.1 157.8L212.8 158.3M212.8 157.5L213.6 158.4M215.5 155.3L216.3 155.2M218.9 152.7L219.9 153.1M219.9 153.1L220.7 153.3M224.2 153.4L225.0 154.1M225.0 153.3L225.8 154.4M225.8 154.1L226.6 154.2M226.6 153.6L227.4 154.7M229.2 152.9L230.1 153.3M230.1 153.6L230.9 152.1M230.9 152.1L231.8 152.0M234.0 150.3L235.1 151.8M235.1 152.3L236.1 152.4M237.1 153.1L238.0 154.2M239.7 154.1L240.5 153.6M240.5 153.8L241.3 153.5M245.5 150.9L246.3 150.3M246.3 149.8L247.1 150.5M247.1 150.2L247.8 150.0M247.8 150.0L248.6 149.8M248.6 149.4L249.5 150.3M249.5 150.2L250.3 150.6M250.3 150.3L251.1 151.2M251.1 150.7L252.0 151.4M252.0 151.6L252.8 151.4M252.8 151.6L253.6 151.9M256.8 149.9L257.7 151.1M257.7 151.1L258.5 150.8M259.3 151.8L260.2 151.0M261.9 152.1L262.9 152.8M262.9 153.1L263.8 152.2M263.8 152.3L264.8 151.9M264.8 152.2L265.6 152.6M265.6 153.0L266.4 153.4M266.4 153.8L267.2 154.2M267.2 154.4L268.1 154.5M268.1 154.2L268.9 154.8M271.4 154.8L272.2 155.4M272.2 155.8L273.1 154.7M274.8 155.0L275.5 153.7M275.5 153.7L276.3 153.7M276.3 153.9L277.1 153.0M277.1 152.6L277.9 153.1M277.9 152.2L278.7 153.3M279.4 153.2L280.2 153.5M285.0 153.2L285.8 152.6M285.8 152.4L286.6 152.7M286.6 152.5L287.5 152.8M287.5 152.8L288.3 153.2M288.3 153.2L289.1 153.5M294.1 151.9L295.0 151.9M295.0 152.5L295.8 151.6M297.5 152.0L298.3 152.1M302.7 148.2L303.5 148.3M304.3 149.6L305.2 149.5M306.0 150.6L306.8 150.1M308.5 148.7L309.3 149.3M309.3 149.1L310.2 149.2M310.2 149.2L311.0 149.4M311.0 149.4L311.9 149.2M311.9 149.5L312.8 148.8M313.8 148.4L314.6 150.0M314.6 149.9L315.4 151.0M315.4 151.3L316.3 151.6M316.3 152.3L317.2 152.2M317.2 152.8L318.1 151.8M318.1 152.6L318.9 151.2M318.9 152.1L319.8 150.7M323.9 148.3L324.8 148.8M328.8 133.4L329.8 135.3M329.8 135.0L331.0 136.2M331.0 136.8L331.9 136.3M333.7 137.3L334.5 137.7M334.5 138.0L335.4 138.0M338.2 134.8L339.1 133.2M341.0 131.9L341.5 131.2M343.0 130.2L343.5 131.9M344.8 134.1L345.5 131.9M345.5 132.2L346.2 131.0M346.2 130.4L347.0 131.6M347.0 131.6L347.8 131.4M351.3 129.0L352.2 127.2M353.9 127.7L354.8 127.8M356.4 126.9L357.2 125.8M357.2 125.7L358.1 126.4M358.1 126.0L358.9 126.7M358.9 126.0L359.8 127.2M362.2 123.4L363.2 125.1M363.2 125.4L364.1 125.3M366.0 124.2L366.9 125.9M366.9 125.9L367.9 126.3M369.8 127.5L370.6 128.6M372.2 128.2L373.1 129.2M373.1 129.3L373.9 129.3M373.9 129.2L374.8 130.2M377.9 125.0L378.8 125.3M378.8 125.6L379.8 126.9M379.8 126.9L380.7 127.5M381.6 128.1L382.7 129.4M382.7 130.0L383.8 130.3M383.8 130.3L384.0 130.8M385.9 131.0L386.8 132.1M386.8 131.5L387.8 133.4M388.7 133.0L389.6 133.7M391.2 130.2L392.1 129.6M395.2 130.6L396.2 130.8M396.2 130.8L397.1 131.0M402.1 127.5L402.8 128.6M402.8 128.3L403.4 129.9M405.9 129.0L406.7 128.7M406.7 129.3L407.5 128.1M407.5 128.4L408.4 128.1M411.2 129.4L412.1 130.1M416.5 126.9L417.4 127.3M417.4 127.0L418.4 126.5M420.2 127.8L421.2 127.3M421.2 127.0L422.1 127.0M422.1 126.9L423.2 127.5M423.2 127.2L424.2 128.3M427.2 124.7L428.0 123.4M430.9 123.7L431.7 123.7M432.5 123.0L433.4 122.5M435.9 119.4L436.8 120.2M437.8 121.3L438.7 121.3M438.7 121.4L439.6 121.9M440.9 120.0L441.8 121.2M447.1 121.2L448.1 121.8M448.1 121.5L449.0 122.4M452.3 121.0L453.2 121.6M459.6 116.3L460.7 115.7M460.7 115.8L461.8 115.6M461.8 115.6L462.5 116.2M462.5 116.2L463.2 116.7M464.0 117.8L464.8 117.5M464.8 117.2L465.7 118.7M465.7 117.8L466.5 119.3M466.5 119.6L467.3 119.4M467.3 119.4L468.2 120.5M468.2 120.0L469.0 121.2M469.0 121.0L469.9 121.4M469.9 122.0L470.9 121.6M470.9 121.6L471.8 121.1M474.4 119.3L475.2 119.0M475.2 119.3L476.1 118.7M476.1 118.8L476.9 118.7M477.8 118.5L478.6 118.4M478.6 118.4L479.4 118.2M480.2 118.1L481.2 119.1M481.2 118.8L482.1 120.2M485.9 120.0L486.7 119.9M487.5 120.3L488.4 120.6M488.4 120.9L489.2 120.2M489.2 120.6L490.0 119.9M490.0 120.6L490.9 119.5M493.4 120.3L494.2 119.6M494.2 119.8L495.0 119.6M495.0 119.6L495.9 119.4M504.9 119.7L505.9 119.6M509.4 120.7L510.2 120.2M512.0 120.0L512.8 119.0M513.7 119.1L514.5 119.0M516.4 121.6L517.3 119.9M519.8 119.7L520.6 119.8M524.5 118.7L525.4 118.8M525.4 119.1L526.4 120.0M527.3 120.8L528.2 121.5M529.1 121.2L529.9 120.9M529.9 120.9L530.8 120.6M532.4 120.0L533.2 119.8M533.2 120.3L534.1 120.2M534.9 121.8L535.8 121.6M536.6 121.9L537.4 121.9M538.2 122.5L539.2 122.8M539.2 123.1L540.1 124.4M540.1 124.4L541.1 125.2M542.9 124.3L543.9 123.3M546.4 121.5L547.2 121.7M547.2 121.3L548.0 122.8M548.0 121.9L548.9 123.4M549.7 123.4L550.5 124.4M550.5 123.9L551.4 124.9M553.9 124.0L554.7 123.6M555.5 122.6L556.4 123.0M558.0 120.3L558.4 122.0M558.4 122.5L558.8 122.8M559.5 125.6L560.4 125.0M561.4 124.4L562.1 123.0M563.5 120.2L564.5 120.9M564.5 120.3L565.5 121.8M566.1 121.0L566.8 119.1M566.8 119.4L566.9 120.7M566.9 120.1L567.0 122.3M567.0 122.3L567.1 123.2M567.2 125.3L567.3 125.7M567.4 127.3L567.5 128.7M567.5 128.7L567.6 130.0M567.6 130.0L568.9 128.1M568.9 128.1L569.1 129.5M569.1 128.9L569.3 131.1M569.3 130.8L569.5 132.2M569.5 131.6L569.8 133.8M570.8 129.7L571.4 129.1M571.7 127.3L572.0 125.9M573.9 120.0L574.3 121.2M574.7 122.8L575.1 123.6M575.1 123.8L575.5 125.0M577.0 122.5L577.8 120.6M579.3 118.8L580.1 118.3M580.1 118.1L580.8 119.4M580.8 118.8L581.4 120.9M581.4 121.2L582.0 121.6M582.0 121.9L582.8 123.6M582.8 123.9L583.5 125.1M586.7 123.3L587.6 122.2M588.6 121.4L589.5 119.8M589.5 120.3L590.0 118.6M591.0 116.2L591.8 116.7M591.8 116.7L592.5 117.1M593.2 117.2L594.2 118.3M595.1 119.0L596.1 117.7M597.9 117.8L598.9 120.3M601.0 118.1L601.8 116.7M606.8 101.9L607.1 103.1M607.1 102.5L607.5 104.7M607.9 105.9L608.2 106.7M608.2 107.5L608.8 107.8M608.8 108.1L609.4 109.4M609.9 110.9L610.5 111.7M612.9 110.0L613.9 111.2M613.9 111.2L614.8 111.8M617.6 106.6L618.0 108.5M618.0 108.9L618.5 109.5M621.7 106.4L622.6 108.0M624.9 106.4L625.2 107.8M625.2 107.2L625.6 109.5M625.6 108.9L626.0 110.8M629.2 102.6L629.5 102.2M629.5 101.9L630.4 102.5M630.4 102.2L631.4 103.3M631.4 103.1L631.7 101.8M633.2 94.4L633.7 96.5M634.2 96.9L634.7 99.0M635.1 100.6L636.1 98.8M636.1 99.1L637.0 98.1M637.0 98.7L637.6 99.1M637.6 99.4L638.2 100.6M638.2 100.3L638.9 102.0M638.9 101.9L639.3 103.1M639.3 102.8L639.8 104.5M639.8 104.4L640.0 101.2M640.0 100.7L640.8 103.3M640.8 103.3L641.5 104.6M644.1 103.8L645.0 105.0M645.6 105.7L646.2 107.8M646.6 106.4L646.9 104.5M650.3 96.4L651.2 96.5M651.2 96.0L652.5 95.4M652.5 95.0L652.8 96.9M652.8 96.2L653.1 98.5M653.4 100.0L653.8 101.1M655.6 98.0L656.6 98.1M656.6 98.5L657.5 98.6M657.5 98.8L657.8 97.2M659.4 91.5L660.0 89.8M660.6 88.8L661.5 90.6M662.7 86.5L663.1 84.1M663.1 84.4L663.6 83.1M665.3 78.0L665.6 76.6M666.5 70.7L666.6 69.8M666.9 67.2L667.0 68.1M667.0 68.9L667.1 69.4M667.1 70.0L667.2 71.0M667.4 72.0L667.5 74.3M668.8 65.0L669.1 66.4M669.1 65.8L669.4 68.1M669.4 67.8L669.7 69.2M669.7 68.6L670.0 70.9M671.2 63.4L671.5 64.4M671.5 64.2L671.8 66.1M671.8 66.5L672.0 67.0M672.2 68.5L672.6 67.3M673.5 62.5L673.8 63.8M673.8 64.3L674.1 64.7M674.4 66.5L674.8 67.3M677.2 62.2L678.1 61.4M678.1 60.6L678.5 62.8M678.5 61.9L679.0 64.0M679.0 63.1L679.4 65.3M679.4 65.0L679.5 66.6M679.5 66.3L679.7 68.3M679.7 68.1L679.8 69.7M679.8 69.7L680.0 71.2M681.6 72.2L681.9 71.5M683.8 67.5L684.2 68.0M684.6 69.8L685.0 71.2M686.2 69.1L687.0 71.0M687.0 70.8L687.8 72.2M687.8 72.8L688.6 72.2M688.6 71.9L689.4 73.0M690.3 68.3L690.6 66.9M691.5 63.8L691.9 62.2M692.8 62.1L693.8 63.4M697.5 59.4L698.4 60.0M700.2 57.1L700.6 56.5M700.6 56.2L701.6 57.2M701.6 56.6L702.5 58.4M702.5 58.7L703.8 56.6M703.8 57.2L705.0 55.1M708.8 53.5L709.7 54.8M709.7 54.7L710.6 55.6M711.9 54.4L712.8 55.3M712.8 55.0L713.8 56.4M713.8 56.0L714.4 57.6M715.0 58.8L715.8 60.0M715.8 59.4L716.5 61.5M717.5 57.4L717.8 55.6M720.8 52.0L721.7 51.5M721.7 51.6L722.5 51.5M722.5 51.5L723.3 51.3M723.3 51.3L724.2 51.2M728.5 51.2L729.4 51.8M731.2 52.8L732.2 54.1M732.2 53.3L733.1 55.0M737.2 50.4L738.3 49.7M739.4 50.9L740.4 49.3M741.5 49.0L742.2 49.5M742.2 48.9L743.0 50.4M743.0 50.7L743.8 50.3M743.8 50.3L744.6 51.2M744.6 51.0L745.4 51.5M745.4 51.2L746.2 52.0M746.2 51.9L747.2 52.9M747.2 52.6L748.1 54.1M748.7 55.7L749.2 56.6M749.2 57.4L749.8 57.8M754.4 56.9L755.2 55.5M756.0 55.4L756.9 55.0M760.9 53.8L761.9 54.8M761.9 54.8L762.7 55.2M764.4 55.4L765.3 55.9M765.3 55.6L766.2 55.2M766.2 55.2L767.0 55.4M767.0 55.4L767.8 55.6M767.8 55.6L768.0 54.4M768.8 54.4L769.7 52.8M769.7 53.4L770.5 52.4M771.3 51.6L772.2 52.1M772.2 51.8L773.0 51.5M773.0 51.8L773.8 51.8M773.8 51.9L774.7 52.3M774.7 52.6L775.5 52.6M776.3 52.2L777.1 53.2M782.0 51.5L782.8 51.7M784.4 51.4L785.2 50.9M791.8 49.4L792.6 47.2M793.4 46.0L793.9 47.9M793.9 47.7L794.4 49.2M794.4 49.5L794.9 50.5M797.4 52.9L798.2 52.5M798.2 52.1L799.0 53.5M800.7 53.8L801.5 53.2M801.5 53.6L802.4 53.0M803.2 53.5L804.0 54.7M804.9 54.6L805.7 55.3M813.0 52.5L813.8 51.3M813.8 51.6L814.7 51.3M818.0 50.6L818.9 50.8M824.7 52.1L825.5 52.5M826.3 52.8L827.1 53.0M827.1 53.3L827.8 53.1M833.0 55.9L833.9 57.8M833.9 57.8L834.9 58.4M837.4 55.7L838.3 55.3M838.3 55.8L839.2 54.1M840.8 52.9L841.5 51.0M841.5 51.2L842.4 51.5M842.4 52.1L843.3 51.4M846.8 52.0L847.5 52.6M847.5 51.9L848.3 53.0M848.3 53.0L849.1 52.8M851.4 53.5L852.2 52.5M856.3 53.8L857.2 55.3M857.2 55.0L858.0 55.6M858.0 55.3L858.8 56.1M858.8 55.6L859.7 56.4M861.3 56.4L862.1 56.2M862.8 56.1L863.6 56.0M863.6 55.7L864.4 55.7M864.4 55.9L865.2 55.0M865.2 55.2L866.0 54.8M867.5 53.5L868.3 54.0M869.9 53.1L870.8 53.3M870.8 53.3L871.8 53.5M871.8 53.2L872.6 54.5M873.4 55.2L874.2 56.0M877.0 55.6L877.8 56.2M877.8 56.5L878.6 56.7M881.1 58.8L882.1 58.6M882.1 59.2L883.0 58.1M883.9 58.9L884.9 57.8M885.7 58.6L886.4 59.1M888.0 60.3L888.8 60.5M888.8 60.7L889.6 61.4M889.6 61.7L890.3 61.9M893.0 63.0L893.9 62.3M893.9 63.1L894.8 61.9M895.8 61.6L896.0 62.9M896.8 63.0L897.7 63.2M897.7 63.0L898.5 63.6M903.7 59.7L904.5 59.3M904.5 59.3L905.4 59.0M905.4 59.3L906.2 59.0M906.2 59.1L907.0 59.2M907.0 59.0L907.9 59.5M907.9 59.4L908.8 59.9M908.8 59.3L909.8 60.7M909.8 60.4L910.7 61.0M910.7 60.4L911.6 61.8M913.3 61.2L914.1 61.0M915.7 59.9L916.5 60.5M916.5 60.0L917.2 60.1M918.0 60.3L918.8 59.1M919.6 58.8L920.4 58.9M921.2 59.1L921.9 58.7M923.5 58.7L924.3 59.0M926.0 59.1L926.8 57.9M926.8 58.5L927.7 57.7M927.7 57.2L928.5 57.8M928.5 57.2L929.3 57.6M929.3 57.7L930.1 57.2M931.6 57.9L932.4 56.8M932.4 57.7L933.2 56.6M936.4 57.2L937.2 57.5M939.8 56.6L940.6 55.5M940.6 55.5L941.4 55.6M941.4 56.1L942.2 55.0M945.4 56.2L946.2 56.0M952.0 52.3L952.9 51.4M952.9 50.9L953.8 51.4M957.2 52.2L958.1 51.5M958.1 52.3L958.9 51.2M960.6 51.0L961.4 49.3M964.5 46.9L965.2 47.1M965.2 47.1L966.0 47.2M966.9 46.0L967.9 46.3" stroke="#1e78e0" stroke-width="1.3" fill="none" stroke-linecap="butt" />
<path d="M8.6 127.7h1.1M11.2 128.0h1.1M16.6 127.8h1.1M18.0 129.4h1.1M18.8 129.6h1.1M19.7 129.7h1.1M25.2 130.4h1.1M41.7 141.2h1.1M43.0 142.5h1.1M51.5 143.0h1.1M67.4 151.5h1.1M74.1 151.1h1.1M83.3 160.1h1.1M85.4 161.3h1.1M88.6 163.8h1.1M90.1 166.2h1.1M90.6 167.6h1.1M95.5 174.3h1.1M98.5 177.6h1.1M128.9 168.8h1.1M131.3 168.9h1.1M143.7 167.4h1.1M144.5 167.5h1.1M151.0 166.7h1.1M151.8 166.4h1.1M156.0 163.5h1.1M156.8 163.6h1.1M157.7 163.7h1.1M159.3 163.0h1.1M167.9 163.9h1.1M168.9 163.8h1.1M173.3 162.9h1.1M175.1 162.4h1.1M176.0 162.3h1.1M176.8 162.5h1.1M202.7 154.5h1.1M205.6 157.1h1.1M207.1 156.6h1.1M220.6 153.9h1.1M221.4 154.6h1.1M231.6 151.7h1.1M232.3 151.2h1.1M233.1 150.8h1.1M236.0 153.1h1.1M241.9 153.1h1.1M242.7 152.9h1.1M258.4 151.1h1.1M260.0 151.4h1.1M260.9 151.8h1.1M269.6 154.8h1.1M270.4 155.0h1.1M272.9 154.8h1.1M273.8 154.5h1.1M278.5 153.1h1.1M280.1 153.6h1.1M300.9 149.2h1.1M301.7 148.8h1.1M303.4 148.5h1.1M305.0 150.2h1.1M326.9 154.0h1.1M332.7 137.1h1.1M337.2 134.6h1.1M342.2 129.3h1.1M343.6 132.7h1.1M347.6 131.7h1.1M348.4 131.2h1.1M349.4 130.0h1.1M352.1 127.5h1.1M352.9 127.6h1.1M367.8 126.9h1.1M368.7 127.7h1.1M380.6 127.8h1.1M383.9 130.7h1.1M384.9 130.9h1.1M392.8 129.3h1.1M394.3 130.4h1.1M403.2 129.6h1.1M404.1 129.4h1.1M404.9 129.1h1.1M408.3 128.7h1.1M409.2 129.7h1.1M418.3 126.8h1.1M428.7 123.1h1.1M431.6 123.2h1.1M436.7 120.6h1.1M441.7 121.1h1.1M443.4 120.8h1.1M445.2 120.5h1.1M446.1 121.0h1.1M450.5 121.4h1.1M451.4 121.3h1.1M453.0 121.5h1.1M456.7 118.3h1.1M471.7 120.5h1.1M473.4 119.5h1.1M479.3 118.2h1.1M486.6 120.2h1.1M490.7 119.8h1.1M491.6 119.9h1.1M498.2 118.6h1.1M499.1 118.8h1.1M499.9 118.9h1.1M500.7 119.0h1.1M503.1 119.0h1.1M505.8 120.2h1.1M506.7 121.1h1.1M507.6 121.3h1.1M508.4 120.9h1.1M510.8 120.1h1.1M511.3 119.7h1.1M512.7 119.2h1.1M517.2 119.8h1.1M518.1 119.5h1.1M518.9 119.6h1.1M520.4 119.9h1.1M521.2 119.8h1.1M522.0 119.3h1.1M522.8 118.8h1.1M523.6 118.4h1.1M528.1 121.4h1.1M531.5 120.2h1.1M537.3 121.9h1.1M552.9 124.1h1.1M554.6 123.4h1.1M556.2 122.2h1.1M558.4 123.8h1.1M566.6 124.0h1.1M585.7 123.8h1.1M592.3 117.3h1.1M611.1 109.5h1.1M611.9 109.4h1.1M614.7 112.0h1.1M616.4 108.9h1.1M616.8 107.5h1.1M618.1 110.5h1.1M620.0 106.9h1.1M632.2 97.0h1.1M633.4 96.9h1.1M643.0 103.1h1.1M649.3 97.4h1.1M652.7 99.0h1.1M657.4 96.4h1.1M663.7 81.2h1.1M666.8 71.9h1.1M667.9 67.2h1.1M672.2 66.4h1.1M679.8 72.0h1.1M685.1 70.3h1.1M689.0 72.0h1.1M695.5 61.7h1.1M698.4 60.3h1.1M719.9 51.8h1.1M729.3 51.9h1.1M734.8 53.6h1.1M755.1 55.6h1.1M762.6 55.4h1.1M776.9 53.0h1.1M777.7 53.1h1.1M785.8 50.2h1.1M787.4 49.8h1.1M789.8 49.2h1.1M790.7 48.9h1.1M792.4 46.9h1.1M810.4 51.9h1.1M811.2 51.9h1.1M812.0 51.9h1.1M815.4 51.0h1.1M816.2 51.1h1.1M818.9 50.1h1.1M822.2 51.2h1.1M823.0 51.6h1.1M823.8 51.9h1.1M825.3 52.6h1.1M827.7 53.4h1.1M831.0 54.9h1.1M849.7 53.1h1.1M850.5 53.0h1.1M861.9 56.2h1.1M866.6 54.2h1.1M872.5 54.8h1.1M874.2 55.8h1.1M887.1 59.8h1.1M894.7 62.0h1.1M899.4 63.7h1.1M914.7 60.6h1.1M917.1 59.8h1.1M922.6 59.0h1.1M929.9 57.3h1.1M930.7 57.3h1.1M933.0 56.8h1.1M933.8 56.6h1.1M935.5 57.0h1.1M946.9 55.7h1.1M950.2 52.9h1.1M954.6 50.8h1.1M955.5 51.2h1.1M958.8 51.4h1.1M961.3 49.2h1.1M965.9 46.9h1.1" stroke="#e6dc5a" stroke-width="1.3" fill="none" stroke-linecap="butt" />
<path d="M20.0 244.3L20.6 243.4M20.6 243.3L21.2 241.9M21.5 243.4L21.8 244.9M22.2 247.6L22.5 249.6M26.9 254.1L27.9 253.0M27.9 252.8L29.0 251.2M29.0 251.2L29.2 252.5M32.5 260.9L33.1 260.0M33.1 260.4L33.8 258.1M33.8 258.7L34.4 256.9M34.4 256.4L35.0 255.9M40.0 272.8L41.0 272.9M41.0 272.2L41.9 272.8M42.4 279.8L42.5 281.2M42.8 285.3L43.0 284.4M43.0 284.2L43.3 282.9M44.1 278.6L44.4 277.6M47.5 288.8L48.3 288.9M48.3 288.6L49.2 287.7M49.2 287.7L50.0 286.9M50.6 288.7L51.3 289.1M51.3 289.7L51.9 290.5M51.9 290.0L52.8 290.3M52.8 290.0L53.8 289.4M55.6 294.7L56.4 294.4M63.5 299.8L64.0 298.3M64.0 298.9L64.4 296.6M67.5 308.1L67.8 306.6M67.8 306.0L68.0 305.4M68.0 305.1L68.2 303.6M68.5 302.1L68.8 300.6M68.8 300.6L69.6 299.4M70.4 298.1L71.2 296.9M71.2 296.3L71.9 295.6M71.9 294.7L72.5 294.1M72.5 293.8L73.1 292.2M73.1 292.2L73.8 290.6M75.4 298.1L75.6 297.6M75.6 296.7L75.8 296.2M75.8 295.9L76.0 294.5M76.0 294.5L76.2 293.1M76.2 292.5L76.3 292.0M76.5 290.3L76.7 288.9M77.2 289.2L77.5 290.1M78.5 293.8L79.5 294.1M79.5 293.1L80.6 293.4M83.5 300.9L83.9 302.6M84.4 303.8L85.3 302.5M85.3 302.2L86.2 301.4M97.6 322.4L97.8 323.4M102.8 335.9L103.8 334.9M105.6 343.1L105.9 345.0M105.9 344.5L106.2 346.4M106.2 345.6L106.5 345.1M106.5 345.1L106.8 343.2M106.8 342.7L107.0 342.2M107.0 341.3L107.2 340.7M107.2 340.4L107.5 339.0M107.5 338.7L107.8 337.6M108.5 343.2L108.8 345.1M108.8 345.0L109.7 344.4M109.7 345.0L110.6 343.4M110.6 344.1L110.9 342.1M110.9 342.2L111.1 340.8M111.1 340.8L111.4 339.2M111.6 337.4L111.9 336.4M112.0 334.6L112.2 333.6M112.2 333.8L112.3 331.9M112.3 331.8L112.4 330.8M112.7 327.9L112.8 326.5M112.8 326.8L113.0 325.0M113.0 325.4L113.1 323.6M113.1 324.4L113.6 322.2M115.0 320.9L115.3 323.3M118.1 337.8L118.2 336.0M118.2 336.1L118.4 334.8M118.4 335.1L118.5 333.2M118.5 333.4L118.6 332.0M118.6 332.0L118.8 330.6M118.8 330.0L118.9 329.6M118.9 329.9L119.0 327.6M119.6 324.6L119.7 326.9M119.7 327.2L119.9 327.7M120.3 331.5L120.4 332.0M120.6 334.4L121.4 332.4M121.4 332.7L122.3 331.7M122.3 331.7L123.1 330.6M123.1 331.2L123.7 328.9M124.3 327.8L125.0 326.4M125.0 326.4L125.6 325.0M125.6 325.0L126.1 323.8M126.1 323.8L126.5 322.5M128.5 317.1L128.9 319.4M129.9 321.3L130.5 323.4M130.5 323.4L131.1 324.2M131.8 326.2L132.2 323.8M132.2 324.4L132.8 322.4M132.8 323.1L132.8 320.8M132.8 320.5L132.8 319.9M132.8 319.9L132.8 318.1M132.8 317.9L132.8 316.9M132.8 317.4L132.9 315.1M132.9 315.4L132.9 313.9M132.9 313.9L132.9 312.5M132.9 311.4L133.0 309.5M133.0 306.2L133.0 305.7M133.0 305.7L133.1 303.8M133.1 302.5L133.1 301.1M133.1 300.8L133.1 299.8M133.2 297.6L133.2 297.1M133.2 296.5L133.2 295.5M133.3 294.2L133.4 295.1M133.4 295.5L133.5 296.4M133.6 298.0L133.7 299.3M133.8 300.4L133.9 302.2M133.9 302.3L134.0 303.3M134.0 303.7L134.1 304.6M134.1 305.1L134.2 306.0M134.2 306.1L134.2 307.5M134.2 308.1L134.8 305.9M134.8 306.2L135.2 305.0M135.2 305.0L135.3 303.6M135.3 303.9L135.4 302.1M135.4 302.6L135.5 300.7M135.5 301.5L135.6 299.2M135.6 299.5L135.7 298.1M135.9 294.8L135.9 294.3M135.9 294.0L136.0 292.6M136.0 292.9L136.1 291.1M136.1 291.2L137.4 290.6M141.0 303.9L141.2 305.9M141.8 308.8L142.1 310.3M143.4 316.5L143.8 318.0M146.5 325.0L146.7 323.5M146.7 323.8L146.8 321.9M146.8 322.0L147.0 320.5M147.0 320.5L147.2 319.0M147.2 319.0L147.4 317.5M150.5 323.1L151.0 323.4M151.0 323.8L151.5 325.0M159.0 333.1L159.4 331.9M161.8 333.0L162.0 335.3M162.0 335.0L162.8 334.6M165.2 333.4L166.1 331.6M167.1 331.2L168.0 329.9M168.0 330.6L168.9 328.1M168.9 327.8L169.9 327.2M178.2 327.2L179.0 326.8M179.9 326.5L180.8 325.8M181.8 324.4L182.4 323.7M182.4 323.4L183.0 321.9M186.1 320.3L186.7 318.4M187.2 317.1L187.8 315.6M191.1 321.6L191.5 320.8M192.0 319.4L192.4 318.1M196.1 318.4L196.2 317.4M196.2 317.6L196.4 315.6M197.1 312.2L197.4 313.9M197.7 315.6L198.0 315.9M199.0 312.7L199.5 312.2M203.2 315.0L203.6 313.4M203.6 313.1L204.0 312.0M206.8 321.9L207.7 323.4M208.6 324.7L209.6 326.4M217.4 326.6L217.8 327.4M218.1 325.3L218.5 324.7M218.5 324.7L218.9 322.7M218.9 322.8L219.2 321.2M219.2 321.2L219.9 322.7M219.9 323.3L220.5 323.9M221.1 325.6L222.1 324.1M222.1 324.7L223.0 322.2M228.0 324.1L228.8 323.9M236.4 324.7L237.4 325.0M238.3 326.5L239.2 326.6M243.9 319.0L244.9 319.1M246.1 315.0L247.1 315.3M248.0 314.4L248.8 314.6M263.2 314.7L264.1 314.5M269.8 320.6L270.5 321.2M270.5 321.6L271.2 321.7M272.9 319.1L273.3 317.1M273.7 315.5L274.1 314.5M274.1 313.8L274.4 316.1M274.4 315.8L274.8 317.2M274.8 316.9L275.1 318.7M277.2 321.6L278.2 321.7M278.2 321.9L279.1 321.1M279.8 323.1L280.4 323.4M291.6 326.2L292.6 323.8M298.5 324.1L299.8 321.7M299.8 321.6L300.4 320.5M300.4 320.3L301.0 318.8M302.9 316.2L303.7 316.6M303.7 316.3L304.5 318.4M305.4 321.3L306.3 322.5M306.3 321.9L307.2 322.6M309.4 327.2L310.4 327.8M311.6 325.3L312.2 323.5M312.2 323.9L312.9 322.1M313.7 323.6L314.5 325.0M317.2 332.2L317.6 331.4M321.0 328.1L321.6 326.1M322.6 325.6L323.5 323.4M323.5 323.1L323.7 325.5M323.7 325.2L323.9 326.7M323.9 326.4L324.1 328.3M324.1 328.1L324.4 326.7M326.6 320.0L326.7 319.5M326.7 319.2L326.8 317.8M326.8 317.8L326.9 316.4M326.9 315.8L327.0 315.3M328.8 301.6L328.9 302.4M328.9 302.2L329.0 303.9M329.0 303.8L329.1 305.0M329.1 305.0L329.8 305.6M334.1 320.9L334.5 321.9M334.5 322.1L335.0 323.5M335.0 322.9L335.4 325.3M339.8 311.3L340.4 312.7M340.4 312.7L341.0 314.0M341.0 313.4L341.6 313.2M341.6 312.6L342.2 312.0M342.7 306.6L342.9 305.9M344.8 315.0L345.7 314.7M346.6 315.3L347.6 316.8M349.8 310.7L350.1 308.4M350.1 308.8L350.4 307.4M360.8 309.7L361.0 310.5M368.7 315.8L368.9 316.4M370.0 315.0L370.0 320.6M372.6 326.1L373.5 325.7M377.0 311.9L377.0 321.2M379.8 309.4L380.4 308.1M380.4 308.1L381.0 306.9" stroke="#f01018" stroke-width="1.15" fill="none" stroke-linecap="butt" />
<path d="M18.8 237.8L18.9 238.8M18.9 238.9L19.0 240.3M19.0 239.7L19.1 242.1M19.1 241.8L19.2 243.2M19.2 243.8L19.3 244.3M19.3 244.0L19.4 246.3M19.4 246.0L20.0 244.6M22.5 249.1L23.4 248.0M23.4 247.2L24.4 246.6M24.4 246.8L24.8 247.3M24.8 247.0L25.2 249.3M25.2 249.3L25.6 250.2M25.6 250.6L26.1 251.5M26.1 252.3L26.5 252.7M26.5 253.0L26.9 254.4M29.2 253.1L29.5 253.4M29.5 253.8L29.8 255.0M29.8 255.6L30.0 255.9M31.2 259.1L31.9 259.9M35.0 255.6L35.3 257.0M36.8 263.9L37.0 265.2M37.0 264.9L37.3 266.7M37.3 265.9L37.6 268.2M37.6 267.9L37.8 269.2M37.8 269.6L38.1 270.5M38.1 270.3L39.0 272.0M39.0 272.2L40.0 273.0M41.9 272.5L42.0 274.0M42.0 274.0L42.1 275.4M42.1 275.7L42.2 276.7M42.2 276.9L42.3 278.3M42.3 278.0L42.4 279.9M42.5 281.2L42.6 282.7M42.6 282.4L42.7 284.3M42.7 284.7L42.8 285.3M43.3 282.9L43.6 281.6M43.9 280.5L44.1 278.7M44.4 277.5L44.6 279.0M44.6 279.0L44.9 280.5M44.9 280.5L45.1 282.0M45.1 282.3L45.4 283.4M45.4 283.2L45.6 285.1M46.2 287.1L46.9 287.6M50.0 286.3L50.6 288.4M53.8 288.8L54.2 290.9M54.2 290.9L54.7 291.8M54.7 291.6L55.1 293.3M55.1 292.5L55.6 294.7M56.4 294.9L57.3 294.7M57.3 294.2L58.1 295.3M58.1 294.7L58.7 296.4M58.7 295.6L59.4 297.8M59.4 297.5L60.0 298.8M60.6 300.0L61.4 300.4M63.1 301.2L63.5 299.8M64.4 296.9L64.5 298.2M64.5 298.2L64.6 299.6M64.6 299.6L64.7 300.9M64.7 300.3L64.8 302.6M64.8 302.3L64.9 303.6M64.9 303.6L65.0 305.0M65.0 304.4L65.8 306.3M65.8 305.7L66.7 307.2M66.7 307.7L67.5 307.8M68.2 304.2L68.5 301.8M69.6 299.7L70.4 298.0M74.0 292.3L74.3 293.2M74.3 293.9L74.6 294.4M74.6 294.1L74.9 296.3M74.9 295.4L75.1 297.7M75.1 298.0L75.4 298.4M76.3 292.0L76.5 290.2M76.7 288.9L76.9 287.5M76.9 287.5L77.2 288.9M77.5 290.3L77.9 291.6M77.9 291.9L78.2 292.9M78.2 292.4L78.5 294.7M80.6 293.7L81.1 294.2M81.1 294.5L81.5 295.9M82.0 296.7L82.5 299.1M82.5 299.4L83.0 299.7M83.0 299.4L83.5 301.6M83.9 302.5L84.4 303.8M86.2 301.2L86.9 302.5M88.8 306.2L89.4 307.5M90.0 309.1L90.6 309.9M90.6 310.0L91.4 311.5M91.4 311.2L92.3 313.1M92.3 313.2L93.1 314.2M93.1 315.0L93.9 314.2M93.9 314.5L94.7 314.7M94.7 314.4L95.5 315.0M95.5 314.2L96.2 315.3M96.2 314.4L96.5 316.7M96.5 316.4L96.8 317.9M96.8 317.6L97.0 319.4M97.0 319.9L97.3 320.4M97.3 321.0L97.6 322.0M97.8 323.0L98.1 325.3M98.1 325.3L98.7 326.1M98.7 326.2L99.4 327.5M99.4 327.5L100.0 328.8M100.0 328.4L100.4 330.4M100.8 331.1L101.1 333.6M101.1 332.6L101.5 335.1M101.5 334.1L101.9 336.6M103.8 334.4L104.1 336.7M104.4 338.4L104.7 338.9M105.0 340.6L105.3 342.0M105.3 341.4L105.6 343.7M107.8 337.5L108.0 339.0M108.2 340.8L108.3 341.9M108.3 342.6L108.5 343.2M111.4 338.9L111.6 337.9M111.9 336.6L112.0 334.7M112.4 330.7L112.6 329.3M112.6 329.9L112.7 327.6M113.6 322.8L114.2 321.1M114.2 320.6L114.8 320.3M114.8 320.3L115.0 321.4M115.3 323.0L115.7 324.5M115.7 323.9L116.0 326.3M116.0 326.0L116.2 327.5M116.2 328.1L116.5 328.6M116.5 329.5L116.8 330.1M117.0 331.5L117.3 333.4M117.3 333.2L117.6 334.6M117.6 334.6L117.8 336.1M117.8 336.1L118.1 337.5M119.0 327.9L119.1 326.5M119.1 326.5L119.3 325.1M119.3 325.7L119.4 323.4M119.4 323.1L119.6 325.5M119.9 327.4L120.1 329.8M120.1 329.5L120.3 330.9M120.4 332.3L120.6 333.8M126.5 322.8L127.0 321.1M128.0 316.6L128.5 317.5M128.9 319.4L129.4 320.3M129.4 320.8L129.9 321.7M131.1 324.1L131.8 325.8M132.9 312.5L132.9 311.1M133.0 309.3L133.0 308.4M133.0 308.5L133.0 306.6M133.1 303.9L133.1 302.5M133.1 299.6L133.2 298.2M133.2 294.8L133.2 294.2M133.2 293.1L133.3 293.6M133.5 297.2L133.6 297.7M133.7 299.0L133.8 300.8M135.7 298.7L135.8 296.4M135.8 296.8L135.9 295.4M137.4 290.9L137.7 291.9M138.0 292.8L138.3 295.1M138.3 295.4L138.6 295.9M138.6 296.6L139.1 297.4M139.1 297.8L139.6 298.6M139.6 298.4L140.0 300.1M140.0 300.0L140.5 301.2M140.8 302.8L141.0 304.2M141.2 305.4L141.5 307.4M141.5 307.6L141.8 308.6M142.1 309.7L142.4 312.2M142.4 311.3L142.7 313.7M142.7 312.8L143.0 315.3M143.8 318.3L144.1 319.4M144.1 319.2L144.5 321.1M144.5 320.4L144.9 322.8M144.9 321.9L145.7 324.1M149.2 315.6L149.5 317.0M149.8 318.4L150.0 319.8M153.0 321.9L153.9 323.4M153.9 323.4L154.9 325.0M156.5 326.9L157.2 329.1M157.2 329.4L158.0 329.7M158.0 330.3L158.5 331.4M159.4 332.2L159.9 330.5M159.9 331.2L160.3 329.1M160.3 329.1L160.8 328.3M161.2 331.2L161.5 332.1M172.0 327.4L172.8 326.8M173.6 325.9L174.6 326.7M175.5 328.4L176.4 327.7M177.4 327.5L178.2 327.2M184.9 319.1L186.1 320.1M188.2 316.9L188.8 318.1M189.2 319.7L190.2 320.5M196.5 313.9L196.6 312.9M197.4 313.8L197.7 315.0M198.0 315.9L198.5 314.9M198.5 314.8L199.0 313.3M199.8 313.1L200.0 314.4M200.0 314.4L200.2 315.6M202.4 318.1L202.8 316.6M202.8 317.2L203.2 314.7M204.0 311.6L204.3 313.6M204.9 316.0L205.2 318.4M205.2 318.4L205.8 319.2M207.7 324.0L208.6 324.7M209.6 326.2L210.5 327.5M210.5 327.8L211.1 328.6M211.1 328.8L211.8 330.0M213.6 331.2L214.6 329.7M215.5 328.7L215.9 326.4M216.3 325.8L216.8 323.4M216.8 323.8L217.1 325.0M217.1 324.7L217.4 326.4M217.8 326.9L218.1 326.2M225.8 320.9L226.8 321.1M226.8 321.6L227.4 322.7M227.4 322.5L228.0 324.5M228.8 323.8L229.7 323.1M230.5 323.1L231.4 321.9M231.4 321.6L232.4 322.2M233.3 321.6L234.2 321.2M234.2 321.9L234.9 322.5M234.9 322.2L235.5 324.7M235.5 324.7L236.4 324.5M237.4 324.7L238.3 326.1M239.2 326.3L239.9 325.6M240.5 323.8L241.2 322.5M241.2 323.1L242.0 320.9M244.9 319.4L245.5 316.9M245.5 317.5L246.1 315.5M254.0 318.7L254.9 319.0M257.9 317.8L258.7 318.3M262.2 315.9L263.2 314.9M264.1 313.8L265.1 315.6M266.0 316.2L266.9 317.6M267.9 319.6L268.8 319.5M268.8 320.4L269.8 320.3M279.1 320.9L279.8 322.6M280.4 323.1L281.0 325.3M284.5 325.7L285.6 326.9M285.6 326.1L286.6 327.8M292.6 323.8L293.5 322.6M293.5 322.2L294.4 322.3M295.9 322.8L296.5 324.5M297.0 325.6L297.8 324.7M297.8 324.7L298.5 323.8M308.5 325.6L309.4 326.3M312.9 322.9L313.7 323.3M314.5 325.0L315.2 326.6M316.0 328.1L316.4 329.6M316.4 329.6L316.8 331.0M316.8 331.3L317.2 332.4M317.6 331.2L317.9 330.0M317.9 330.3L318.2 328.6M318.2 328.1L318.5 327.8M318.5 327.8L319.4 328.3M320.4 330.0L321.0 327.5M321.6 326.2L322.6 325.0M324.4 326.7L324.8 325.3M325.1 323.3L325.4 322.8M328.6 302.6L328.8 301.2M329.8 305.6L330.0 315.0M331.8 318.9L332.9 318.4M332.9 318.1L334.1 320.9M342.2 311.9L342.4 310.3M342.4 309.7L342.6 309.1M342.6 308.8L342.7 307.2M347.6 316.4L348.5 317.9M354.1 300.6L354.8 302.2M354.8 302.5L355.4 303.6M365.6 309.6L366.4 310.2M366.4 310.4L367.2 310.1M368.5 314.1L368.7 315.1M368.9 316.1L369.1 318.4M371.6 324.7L372.6 325.6M373.5 325.7L374.1 325.0M374.1 324.9L374.8 323.8M375.5 322.5L376.2 322.8M381.4 308.0L381.8 309.9M383.5 315.0L383.5 318.8" stroke="#1e78e0" stroke-width="1.15" fill="none" stroke-linecap="butt" />
<path d="M20.8 242.7h1.1M21.3 245.7h1.1M21.6 247.2h1.1M29.8 256.9h1.1M30.4 258.1h1.1M31.6 260.6h1.1M34.9 257.7h1.1M35.2 259.1h1.1M35.5 260.4h1.1M35.8 261.8h1.1M36.1 263.2h1.1M43.2 280.9h1.1M45.4 285.7h1.1M46.6 288.7h1.1M59.7 299.4h1.1M61.3 300.6h1.1M62.1 301.0h1.1M73.3 291.3h1.1M81.2 296.6h1.1M86.6 303.1h1.1M87.3 304.4h1.1M87.9 305.6h1.1M89.1 308.1h1.1M100.0 331.0h1.1M101.8 335.9h1.1M103.7 337.1h1.1M104.3 339.9h1.1M107.5 339.8h1.1M116.4 331.1h1.1M123.5 328.5h1.1M126.7 320.6h1.1M132.7 293.2h1.1M137.3 292.7h1.1M140.1 302.0h1.1M142.6 315.8h1.1M145.5 324.4h1.1M148.2 316.1h1.1M149.1 317.7h1.1M149.6 320.4h1.1M149.8 321.8h1.1M151.3 324.2h1.1M152.1 322.7h1.1M158.2 332.3h1.1M160.3 328.8h1.1M160.6 330.2h1.1M161.1 332.9h1.1M164.2 333.3h1.1M166.0 331.4h1.1M169.9 327.8h1.1M172.7 326.1h1.1M182.9 321.2h1.1M186.4 317.8h1.1M187.4 316.2h1.1M188.4 318.8h1.1M191.2 320.0h1.1M194.2 320.2h1.1M195.9 315.0h1.1M196.1 312.0h1.1M196.4 311.9h1.1M199.1 312.5h1.1M199.8 316.2h1.1M203.9 314.2h1.1M204.2 315.8h1.1M205.4 320.0h1.1M205.9 321.2h1.1M212.6 330.9h1.1M214.5 328.9h1.1M215.6 325.9h1.1M220.3 324.9h1.1M239.6 324.5h1.1M242.9 320.0h1.1M248.7 314.7h1.1M250.4 315.8h1.1M251.4 317.3h1.1M258.6 318.6h1.1M260.1 318.8h1.1M260.8 317.5h1.1M261.4 316.2h1.1M266.9 318.3h1.1M271.1 321.1h1.1M271.9 319.5h1.1M272.9 316.6h1.1M274.7 319.3h1.1M275.3 320.5h1.1M276.2 321.4h1.1M280.9 324.7h1.1M281.9 324.1h1.1M286.5 328.4h1.1M289.8 321.2L289.8 328.1M295.1 322.5h1.1M296.2 325.0h1.1M300.9 318.0h1.1M301.9 316.4h1.1M307.0 323.1h1.1M307.6 324.4h1.1M310.1 327.3h1.1M310.8 325.8h1.1M315.1 327.3h1.1M324.4 324.6h1.1M325.4 321.6h1.1M327.4 307.4h1.1M327.6 306.1h1.1M327.8 304.7h1.1M327.9 303.3h1.1M338.9 310.7h1.1M349.1 310.8h1.1M350.0 306.7h1.1M359.7 308.8h1.1M374.6 323.4h1.1M380.7 307.6h1.1M381.5 310.5h1.1" stroke="#e6dc5a" stroke-width="1.15" fill="none" stroke-linecap="butt" />
<path d="M12.5 218.1L14.4 220.0M384.4 315.0L384.6 318.1M401.8 311.9L402.8 314.4M404.6 318.1h1.4M408.4 318.1L409.6 320.6M413.0 319.4L413.4 322.5M417.8 330.0L419.0 331.2M420.6 327.5h1.4M429.8 324.4h1.4M436.5 313.8L436.5 316.9M444.0 311.5L445.9 315.0M447.8 315.6L449.0 318.5M456.5 319.4L457.8 321.2M465.5 325.6L465.9 330.6M469.6 331.5L470.2 334.4M476.8 325.6L477.1 328.8M481.5 329.4L483.4 330.0M509.0 333.8L509.2 335.6M534.8 323.5L536.4 325.6M538.2 330.0h1.4M539.8 333.8L540.1 340.0M543.2 337.5L544.5 343.8M567.0 327.5L567.6 342.5M568.9 343.8L569.8 361.2M574.9 326.2L574.9 331.2M575.5 335.0L575.8 342.5M578.5 309.8L578.5 318.8M584.2 323.1L584.2 331.2M592.6 311.2L593.0 319.4M595.5 325.6L595.8 330.0M597.0 331.9L598.2 335.0M599.2 338.8L599.5 342.5M604.5 323.1L605.1 326.2M607.2 324.4L608.0 338.1M608.8 330.0h1.4M614.8 331.2L615.5 336.2M619.4 321.9h1.4M621.8 327.5L622.0 330.6M624.8 330.0L625.1 333.1M625.5 335.6L626.0 338.8M628.0 340.6L628.9 342.5M630.1 336.9L630.8 340.0M633.9 325.0L635.8 328.1M637.5 327.5h1.4M639.5 341.2L639.5 344.4M621.5 327.5L621.9 330.6M624.8 330.0L625.2 333.1M625.6 335.6L626.0 338.8M628.1 341.2L629.4 340.0M630.0 336.9L630.6 340.0M635.0 326.2L635.6 329.4M638.0 326.2h1.4M640.0 340.6L640.6 346.2M645.0 343.8L645.0 348.1M647.5 343.1L648.1 346.2M645.6 351.2L647.2 354.0M651.5 328.1L651.9 333.8M655.8 331.2h1.4M659.4 322.5L660.0 326.2M663.8 313.8L664.0 317.5M666.5 301.9L666.9 308.8M671.0 298.1L671.0 300.6M672.4 288.8h1.4M679.8 293.8L679.8 303.8M680.6 305.0L681.0 310.6M681.8 305.0h1.4M684.4 300.6L684.4 303.8M686.5 308.1L688.1 321.2M695.3 292.5h1.4M700.6 283.1L701.2 288.1M709.8 270.6L710.0 276.9M711.9 284.4L713.1 287.5M721.2 279.4L721.9 282.5M728.0 276.9h1.4M733.7 286.9h1.4M758.3 281.2h1.4M776.3 275.0h1.4M798.6 276.2L798.6 280.0M801.8 279.0L803.0 279.0M812.8 273.1L813.0 274.4M843.2 264.4L843.2 266.2M885.0 285.0h1.4M922.9 288.8L923.5 291.2" stroke="#1e78e0" stroke-width="1.1" fill="none" stroke-linecap="round" opacity="1"/>
<path d="M385.2 317.8L388.4 320.6M391.8 315.6L392.1 318.8M406.4 322.2h1.4M420.2 325.6L420.5 332.5M428.9 321.9h1.4M432.1 317.5L432.8 320.6M434.6 317.8h1.4M437.7 315.6h1.4M441.4 318.1h1.4M454.6 315.6L455.9 315.6M481.1 332.2h1.4M486.5 331.2L488.4 333.8M517.2 325.6L517.2 329.4M541.3 330.0h1.4M541.8 335.0L541.8 339.4M545.1 328.1L546.4 333.1M560.1 335.0L561.8 330.0M564.5 328.8L566.4 327.8M570.1 345.0L570.8 355.0M573.0 339.4L573.2 346.2M573.9 325.6L573.9 332.5M577.2 321.2L577.0 334.4M579.5 310.0L579.5 318.8M583.2 321.9L583.5 325.6M586.0 324.4h1.4M588.5 330.0L588.9 332.5M593.2 320.0h1.4M603.0 336.9L603.2 343.8M605.7 321.9h1.4M612.3 327.8h1.4M617.2 321.9L617.2 328.8M631.8 339.4L632.0 342.5M632.6 327.5L633.0 334.4M633.8 324.0h1.4M631.9 338.8L631.9 342.5M632.5 326.9L633.1 335.0M634.0 323.8h1.4M637.5 329.4L638.8 330.0M649.4 330.0L649.8 335.0M654.3 330.6h1.4M658.8 321.2L660.0 326.2M663.1 315.0L662.5 318.8M665.6 310.6L666.2 312.5M668.1 305.0L668.1 310.6M670.6 297.8L670.6 301.2M672.8 288.1L672.8 291.9M674.0 294.4L674.0 297.2M706.0 279.4L706.5 283.8M714.8 288.5L715.6 290.0M720.6 275.0L720.2 279.4M727.5 276.9L727.5 279.4M767.2 271.2L767.2 274.4M768.5 271.0h1.4M796.7 277.2h1.4M841.1 263.1L841.1 266.2M838.8 271.2h1.4M852.5 267.2h1.4M900.9 285.0h1.4M905.0 283.1h1.4M935.3 283.1h1.4M940.0 279.4h1.4M966.5 275.2h1.4" stroke="#f01018" stroke-width="1.1" fill="none" stroke-linecap="round" opacity="1"/>
<path d="M7.2 221.5L9.8 221.5M13.1 219.4L14.8 219.8M388.4 321.2L390.2 321.5M392.1 314.0L393.4 314.0M394.0 315.2L395.9 315.2M400.9 311.2L401.5 312.5M402.8 319.4L404.6 319.4M402.7 321.2h1.4M414.6 323.1L416.5 327.5M418.9 333.1h1.4M422.8 329.4L424.6 329.4M433.1 318.8h1.4M438.9 318.8h1.4M440.2 321.9h1.4M443.6 311.5h1.4M450.2 318.1L454.0 317.8M457.7 321.9h1.4M461.4 319.0h1.4M463.3 321.2h1.4M466.5 331.5L468.4 331.5M471.5 335.2L473.4 335.2M473.9 329.8h1.4M477.1 331.2L479.6 331.2M492.7 327.5h1.4M494.6 329.4h1.4M495.8 331.2h1.4M497.3 329.4h1.4M503.6 323.1h1.4M505.8 329.4h1.4M507.7 333.1h1.4M510.6 331.2h1.4M512.6 331.5L515.1 331.5M515.0 333.8h1.4M518.8 331.2h1.4M523.2 331.2h1.4M525.0 327.2h1.4M531.4 323.5L532.6 323.5M536.9 327.5h1.4M547.0 331.5L550.1 331.5M551.3 333.8h1.4M553.2 325.0L559.5 325.0M552.0 329.4L558.2 329.4M557.5 327.2h1.4M558.8 333.8h1.4M568.0 339.4L568.2 343.8M572.2 347.5L572.2 351.9M579.4 319.4h1.4M580.0 325.6h1.4M582.2 330.0L582.6 333.1M585.0 327.5h1.4M590.0 319.4h1.4M589.8 323.1h1.4M597.3 334.4h1.4M600.1 344.4L602.0 343.1M603.2 331.2h1.4M610.8 335.6L611.4 336.9M612.0 331.2L613.9 331.2M616.9 331.2h1.4M619.5 325.6L621.4 325.6M621.9 334.4h1.4M625.7 343.1h1.4M631.5 335.0h1.4M637.0 329.4L637.6 333.8M638.5 337.5h1.4M619.9 325.6h1.4M622.4 333.8h1.4M626.2 343.1h1.4M636.2 333.5h1.4M638.7 337.5h1.4M641.2 343.1L644.4 343.1M646.2 353.8h1.4M648.3 335.6h1.4M652.8 336.2h1.4M656.8 331.2h1.4M660.5 319.4h1.4M663.7 318.8h1.4M668.7 302.5h1.4M675.0 292.2L679.4 292.2M680.5 308.1h1.4M684.3 308.1h1.4M691.2 313.8L691.0 317.5M693.1 308.1L693.1 310.6M701.8 288.1h1.4M703.3 283.8h1.4M704.3 285.6h1.4M704.9 280.0h1.4M712.4 285.0h1.4M713.7 291.9h1.4M715.8 294.0h1.4M717.4 286.9h1.4M722.4 283.1h1.4M725.6 283.8L725.6 286.2M726.2 280.6h1.4M728.7 278.8h1.4M730.0 284.4L731.2 284.4M731.8 282.8h1.4M734.5 290.0h1.4M745.5 284.4h1.4M745.5 286.9h1.4M750.3 286.9h1.4M754.9 282.8h1.4M759.9 283.1h1.4M762.4 283.1h1.4M764.5 280.6h1.4M765.5 276.5h1.4M772.3 272.5h1.4M777.4 276.5L779.9 276.5M784.2 272.2h1.4M785.5 275.0L786.8 275.0M787.9 275.0h1.4M792.3 275.0h1.4M792.9 276.2h1.4M794.2 278.8L796.1 278.8M800.4 278.5h1.4M808.3 278.8h1.4M810.0 275.0h1.4M817.9 276.5h1.4M820.0 274.8h1.4M822.9 276.5h1.4M827.3 276.5h1.4M826.0 278.8h1.4M829.9 278.8L831.8 278.8M834.8 278.8h1.4M833.3 282.8h1.4M839.5 268.5h1.4M844.2 268.5h1.4M848.3 267.2h1.4M850.0 271.0h1.4M853.5 268.5h1.4M857.9 271.0h1.4M861.0 272.5h1.4M867.0 271.0h1.4M871.7 272.5h1.4M865.4 275.0h1.4M872.0 276.5h1.4M874.2 282.8h1.4M881.0 282.8h1.4M882.0 284.4h1.4M886.0 286.9h1.4M888.0 288.5L890.5 288.5M894.2 288.8h1.4M897.9 290.0L899.8 290.0M907.8 282.9h1.4M910.9 288.5h1.4M915.0 288.5h1.4M920.3 286.9h1.4M922.5 290.6h1.4M924.7 292.5h1.4M928.4 292.5h1.4M930.3 290.0h1.4M932.9 288.5L934.1 288.5M936.5 281.0h1.4M942.5 279.0h1.4M947.9 276.5L949.8 276.5M951.5 276.5h1.4M955.4 276.5L960.4 276.5M963.5 276.5L966.0 276.5M960.4 279.0L963.5 279.0" stroke="#e6dc5a" stroke-width="1.0" fill="none" stroke-linecap="round" opacity="0.85"/>
<path d="M693.8 295.6L693.8 307.5M695.0 294.0L696.9 295.0M697.5 286.9L698.5 291.9M699.8 280.6L699.8 286.2M781.8 275.6L783.2 271.2" stroke="#ff0000" stroke-width="1.6" fill="none" stroke-linecap="round" opacity="1"/>
<path d="M709.4 276.9L711.2 281.2" stroke="#1e78e0" stroke-width="1.8" fill="none" stroke-linecap="round" opacity="1"/>
</svg>
<span class="t xl xb" style="left:5.6px;top:186.7px">06</span>
<span class="t xl" style="left:30.6px;top:186.7px">09</span>
<span class="t xl" style="left:79.4px;top:186.7px">10</span>
<span class="t xl" style="left:127.8px;top:186.7px">11</span>
<span class="t xl" style="left:176.0px;top:186.7px">12</span>
<span class="t xl" style="left:224.6px;top:186.7px">13</span>
<span class="t xl" style="left:272.3px;top:186.7px">14</span>
<span class="t xl" style="left:308.4px;top:186.7px">15</span>
<span class="t xl" style="left:329.7px;top:186.7px">16</span>
<span class="t xl" style="left:353.4px;top:186.7px">17</span>
<span class="t xl" style="left:402.0px;top:186.7px">18</span>
<span class="t xl" style="left:449.6px;top:186.7px">19</span>
<span class="t xl" style="left:496.8px;top:186.7px">20</span>
<span class="t xl" style="left:543.8px;top:186.7px">21</span>
<span class="t xl" style="left:591.6px;top:186.7px">22</span>
<span class="t xl" style="left:639.8px;top:186.7px">23</span>
<span class="t xl" style="left:687.8px;top:186.7px">00</span>
<span class="t xl" style="left:736.0px;top:186.7px">01</span>
<span class="t xl" style="left:784.6px;top:186.7px">02</span>
<span class="t xl" style="left:832.4px;top:186.7px">03</span>
<span class="t xl" style="left:880.6px;top:186.7px">04</span>
<span class="t xl" style="left:927.8px;top:186.7px">05</span>
<span class="t xl" style="left:955.8px;top:186.7px">06</span>
<span class="t xl" style="left:688.0px;top:175.0px">06</span>
<span class="t yl" style="top:55.2px">11,300</span>
<span class="t yl" style="top:94.7px">11,200</span>
<span class="t yl" style="top:134.0px">11,100</span>
<span class="t yl" style="top:173.6px">11,000</span>
<div class="pb" style="top:38.6px;height:16.6px"><span style="margin-top:-6.7px">11,353</span></div>
<span class="t inf" style="top:39.2px"><span class="k">時刻</span>:06:00 <span class="k">始値</span>:11,353 <span class="k">高値</span>:11,353 <span class="k">安値</span>:11,353 <span class="k">終値</span>:11,353</span>
<span class="t xl xb" style="left:5.6px;top:367.7px">06</span>
<span class="t xl" style="left:30.6px;top:367.7px">09</span>
<span class="t xl" style="left:79.4px;top:367.7px">10</span>
<span class="t xl" style="left:127.8px;top:367.7px">11</span>
<span class="t xl" style="left:176.0px;top:367.7px">12</span>
<span class="t xl" style="left:224.6px;top:367.7px">13</span>
<span class="t xl" style="left:272.3px;top:367.7px">14</span>
<span class="t xl" style="left:308.4px;top:367.7px">15</span>
<span class="t xl" style="left:329.7px;top:367.7px">16</span>
<span class="t xl" style="left:353.4px;top:367.7px">17</span>
<span class="t xl" style="left:402.0px;top:367.7px">18</span>
<span class="t xl" style="left:449.6px;top:367.7px">19</span>
<span class="t xl" style="left:496.8px;top:367.7px">20</span>
<span class="t xl" style="left:543.8px;top:367.7px">21</span>
<span class="t xl" style="left:591.6px;top:367.7px">22</span>
<span class="t xl" style="left:639.8px;top:367.7px">23</span>
<span class="t xl" style="left:687.8px;top:367.7px">00</span>
<span class="t xl" style="left:736.0px;top:367.7px">01</span>
<span class="t xl" style="left:784.6px;top:367.7px">02</span>
<span class="t xl" style="left:832.4px;top:367.7px">03</span>
<span class="t xl" style="left:880.6px;top:367.7px">04</span>
<span class="t xl" style="left:927.8px;top:367.7px">05</span>
<span class="t xl" style="left:955.8px;top:367.7px">06</span>
<span class="t xl" style="left:688.0px;top:356.0px">06</span>
<span class="t yl" style="top:215.6px">4,525</span>
<span class="t yl" style="top:313.5px">4,475</span>
<span class="t yl" style="top:362.5px">4,450</span>
<div class="pb" style="top:266.9px;height:16.3px"><span style="margin-top:-7.5px">4,501</span></div>
<span class="t inf" style="top:206.0px"><span class="k">時刻</span>:06:00 <span class="k">始値</span>:4,501 <span class="k">高値</span>:4,501 <span class="k">安値</span>:4,501 <span class="k">終値</span>:4,501</span>
<span class="t xl xb" style="left:5.6px;top:532.1px">06</span>
<span class="t xl" style="left:30.6px;top:532.1px">09</span>
<span class="t xl" style="left:79.4px;top:532.1px">10</span>
<span class="t xl" style="left:127.8px;top:532.1px">11</span>
<span class="t xl" style="left:176.0px;top:532.1px">12</span>
<span class="t xl" style="left:224.6px;top:532.1px">13</span>
<span class="t xl" style="left:272.3px;top:532.1px">14</span>
<span class="t xl" style="left:308.4px;top:532.1px">15</span>
<span class="t xl" style="left:329.7px;top:532.1px">16</span>
<span class="t xl" style="left:353.4px;top:532.1px">17</span>
<span class="t xl" style="left:402.0px;top:532.1px">18</span>
<span class="t xl" style="left:449.6px;top:532.1px">19</span>
<span class="t xl" style="left:496.8px;top:532.1px">20</span>
<span class="t xl" style="left:543.8px;top:532.1px">21</span>
<span class="t xl" style="left:591.6px;top:532.1px">22</span>
<span class="t xl" style="left:639.8px;top:532.1px">23</span>
<span class="t xl" style="left:687.8px;top:532.1px">00</span>
<span class="t xl" style="left:736.0px;top:532.1px">01</span>
<span class="t xl" style="left:784.6px;top:532.1px">02</span>
<span class="t xl" style="left:832.4px;top:532.1px">03</span>
<span class="t xl" style="left:880.6px;top:532.1px">04</span>
<span class="t xl" style="left:927.8px;top:532.1px">05</span>
<span class="t xl" style="left:955.8px;top:532.1px">06</span>
<span class="t xl" style="left:688.0px;top:519.4px">06</span>
<span class="t yl" style="top:403.9px">6,800</span>
<span class="t yl" style="top:446.0px">6,700</span>
<span class="t yl" style="top:488.1px">6,600</span>
<span class="t yl" style="top:530.2px">6,500</span>
<div class="pb" style="top:386.4px;height:16.3px"><span style="margin-top:-7.9px">6,852</span></div>
<span class="t inf" style="top:387.0px">[<span class="k">金</span> 25/02 11,353<span class="k">×</span>1.00]<span class="k">－</span>[<span class="k">白金</span> 25/02 4,501<span class="k">×</span>1.00] <span class="k">終値</span> <span class="k">時刻</span>:06:00 6,852</span>
</div>
</body></html>
